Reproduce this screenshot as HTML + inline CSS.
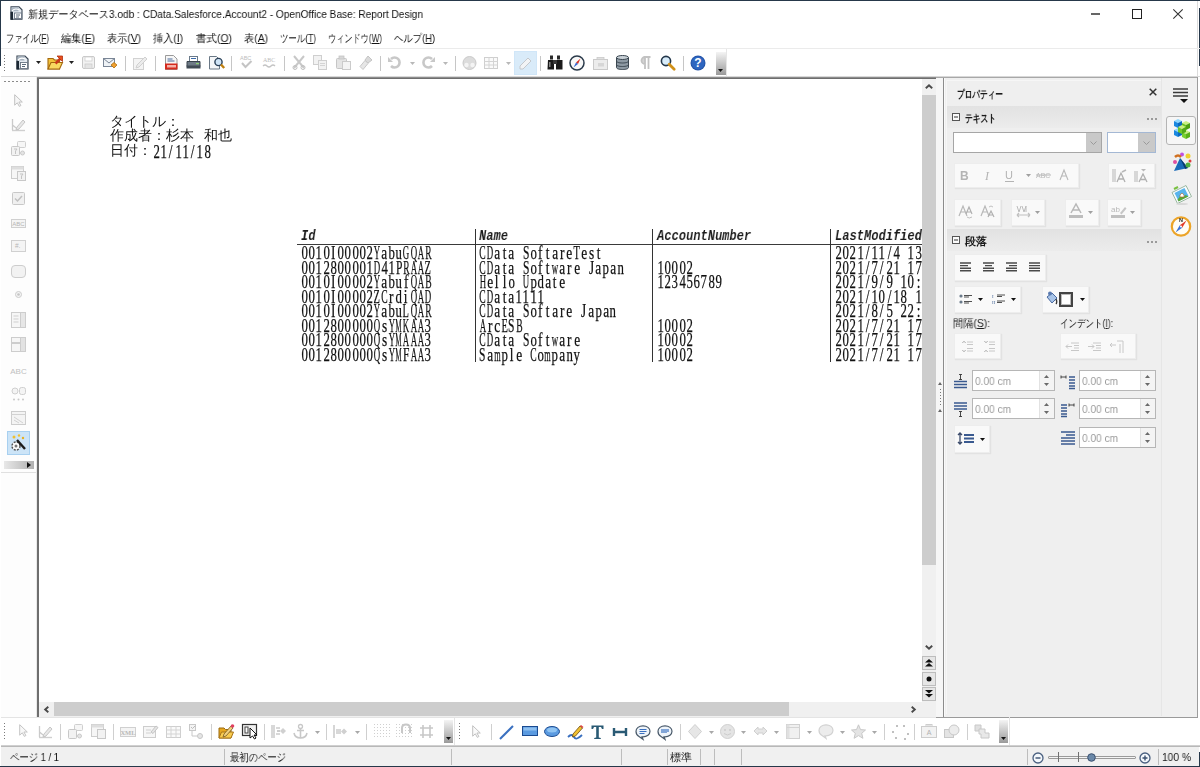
<!DOCTYPE html>
<html><head><meta charset="utf-8"><style>*{box-sizing:border-box;margin:0;padding:0}
html,body{width:1200px;height:767px;overflow:hidden;background:#fff;font-family:"Liberation Sans",sans-serif;font-size:12px;color:#000;position:relative}
.a{position:absolute}
.t{position:absolute;-webkit-font-smoothing:antialiased;will-change:transform;white-space:nowrap;line-height:1;transform-origin:0 0}
svg{position:absolute;overflow:visible}
.m{position:absolute;-webkit-font-smoothing:antialiased;will-change:transform;white-space:pre;line-height:1;font-family:"Liberation Mono",monospace;transform-origin:0 0}
</style></head><body><div class="a" style="left:0px;top:0px;width:1200px;height:1px;background:#26384a;"></div><div class="a" style="left:0px;top:0px;width:1px;height:66px;background:#26384a;"></div><div class="a" style="left:0px;top:766px;width:1200px;height:1px;background:#26384a;"></div><div class="a" style="left:1199px;top:752px;width:1px;height:15px;background:#26384a;"></div><svg style="left:10px;top:6px;" width="13" height="14" viewBox="0 0 13 14"><path d="M1 .8h8l3 3v9.5H1z" fill="#e6ecf2" stroke="#3a4654" stroke-width="1.1"/><path d="M1.5 1.3h7v4h-7z" fill="#a8b4c0"/><path d="M2 4.8q3-3 7-1" stroke="#fff" stroke-width="1.1" fill="none"/><rect x=".5" y="5.8" width="2.5" height="8" fill="#1c2834"/><rect x="4.5" y="7" width="7" height="5.5" fill="#fff" stroke="#6a7684" stroke-width=".9"/><path d="M6 9h4M6 11h3" stroke="#5a6a7a" stroke-width="1"/></svg><div class="t" id="t0" style="left:28px;top:9px;font-size:11px;color:#111;transform:scaleX(0.9195);">新規データベース3.odb : CData.Salesforce.Account2 - OpenOffice Base: Report Design</div><div class="a" style="left:1091px;top:13px;width:9px;height:2px;background:#666;"></div><div class="a" style="left:1132px;top:9px;width:10px;height:10px;background:transparent;border:1.2px solid #222"></div><svg style="left:1173px;top:9px;" width="10" height="10" viewBox="0 0 10 10"><path d="M0.3 0.3L9.7 9.7M9.7 0.3L0.3 9.7" stroke="#333" stroke-width="1.1"/></svg><div class="a" style="left:1197px;top:1px;width:1px;height:76px;background:#dcdcdc;"></div><div class="a" style="left:1199px;top:8px;width:1px;height:58px;background:#26384a;"></div><div class="t" id="t1" style="left:6px;top:33px;font-size:11px;color:#141414;transform:scaleX(0.7404);">ファイル(<u>F</u>)</div><div class="t" id="t2" style="left:61px;top:33px;font-size:11px;color:#141414;transform:scaleX(0.9267);">編集(<u>E</u>)</div><div class="t" id="t3" style="left:107px;top:33px;font-size:11px;color:#141414;transform:scaleX(0.9267);">表示(<u>V</u>)</div><div class="t" id="t4" style="left:153px;top:33px;font-size:11px;color:#141414;transform:scaleX(0.9257);">挿入(<u>I</u>)</div><div class="t" id="t5" style="left:196px;top:33px;font-size:11px;color:#141414;transform:scaleX(0.9497);">書式(<u>O</u>)</div><div class="t" id="t6" style="left:244px;top:33px;font-size:11px;color:#141414;transform:scaleX(0.9343);">表(<u>A</u>)</div><div class="t" id="t7" style="left:280px;top:33px;font-size:11px;color:#141414;transform:scaleX(0.7647);">ツール(<u>T</u>)</div><div class="t" id="t8" style="left:328px;top:33px;font-size:11px;color:#141414;transform:scaleX(0.7424);">ウィンドウ(<u>W</u>)</div><div class="t" id="t9" style="left:394px;top:33px;font-size:11px;color:#141414;transform:scaleX(0.8489);">ヘルプ(<u>H</u>)</div><div class="a" style="left:1px;top:48px;width:1199px;height:1px;background:#ebebeb;"></div><div class="a" style="left:4px;top:55px;width:1px;height:1px;background:#7a7a7a;"></div><div class="a" style="left:4px;top:58px;width:1px;height:1px;background:#7a7a7a;"></div><div class="a" style="left:4px;top:61px;width:1px;height:1px;background:#7a7a7a;"></div><div class="a" style="left:4px;top:64px;width:1px;height:1px;background:#7a7a7a;"></div><div class="a" style="left:4px;top:67px;width:1px;height:1px;background:#7a7a7a;"></div><div class="a" style="left:4px;top:70px;width:1px;height:1px;background:#7a7a7a;"></div><svg style="left:16px;top:55px;" width="13" height="15" viewBox="0 0 13 15"><path d="M1 1h8l3 3v10H1z" fill="#e6ecf2" stroke="#3a4654" stroke-width="1.2"/><path d="M1.5 1.5h7v4h-7z" fill="#a8b4c0"/><path d="M2 5q3-3 7-1" stroke="#fff" stroke-width="1.2" fill="none"/><rect x=".5" y="6" width="2.6" height="8.5" fill="#1c2834"/><rect x="4.5" y="7.5" width="7" height="6" fill="#fff" stroke="#6a7684" stroke-width=".9"/><path d="M6 9.5h4M6 11.5h3" stroke="#5a6a7a" stroke-width="1"/></svg><svg style="left:36px;top:61px;" width="5" height="3" viewBox="0 0 5 3"><path d="M0 0h5l-2.5 3z" fill="#222"/></svg><svg style="left:47px;top:55px;" width="16" height="15" viewBox="0 0 16 15"><path d="M1 3.5h5l1.5 1.5h5v9H1z" fill="#f2c23a" stroke="#a4680e" stroke-width="1.1"/><path d="M1 14l3-6.5h11.5L12.5 14z" fill="#f8d860" stroke="#a4680e" stroke-width="1.1"/><path d="M8.5 8.5L13.5 3.5" stroke="#c8381a" stroke-width="2.6"/><path d="M10 1h5.5v5.5z" fill="#e8501e" stroke="#b03010" stroke-width=".8"/></svg><svg style="left:69px;top:61px;" width="5" height="3" viewBox="0 0 5 3"><path d="M0 0h5l-2.5 3z" fill="#222"/></svg><svg style="left:82px;top:56px;" width="13" height="13" viewBox="0 0 13 13"><rect x=".5" y=".5" width="12" height="12" rx="1.5" fill="#f2f2f2" stroke="#c8c8c8"/><rect x="3" y="1" width="7" height="4" fill="#fff" stroke="#d0d0d0" stroke-width=".8"/><rect x="3" y="8" width="7" height="4.5" fill="#e4e4e4" stroke="#ccc" stroke-width=".8"/></svg><svg style="left:103px;top:58px;" width="15" height="11" viewBox="0 0 15 11"><rect x=".5" y=".5" width="11" height="8" fill="#eef2f6" stroke="#7a8696"/><path d="M.5 .5l5.5 4.5 5.5-4.5" stroke="#7a8696" fill="none"/><path d="M11 4.5l3 2.5-3 3-3-3z" fill="#f0a030" stroke="#b07010" stroke-width=".8"/></svg><div class="a" style="left:125px;top:56px;width:1px;height:15px;background:#c6c6c6;"></div><svg style="left:133px;top:56px;" width="14" height="14" viewBox="0 0 14 14"><rect x=".5" y="2.5" width="10" height="11" fill="#f4f4f4" stroke="#d2d2d2"/><path d="M4 9l8-8 2 2-8 8-3 1z" fill="#ececec" stroke="#d0d0d0"/></svg><div class="a" style="left:155px;top:56px;width:1px;height:15px;background:#c6c6c6;"></div><svg style="left:165px;top:55px;" width="13" height="15" viewBox="0 0 13 15"><path d="M.5 .5h8l3.5 3.5v10.5h-11.5z" fill="#f6f6f6" stroke="#9a9a9a"/><rect x="2.5" y="3.5" width="5" height="1" fill="#4a6a9a"/><rect x="2.5" y="5.5" width="7" height="1" fill="#4a6a9a"/><rect x="0" y="8.5" width="12.5" height="6" fill="#d42a1e"/><rect x="2" y="10" width="9" height="2.5" fill="#f6b0a8"/></svg><svg style="left:186px;top:56px;" width="15" height="13" viewBox="0 0 15 13"><rect x="3.5" y=".5" width="8" height="5" fill="#fff" stroke="#6a7a8a"/><rect x="5" y="2" width="5" height="1" fill="#3a6aaa"/><path d="M1 5.5h13v5h-13z" fill="#6e7a86" stroke="#38424c"/><rect x="0.5" y="9.5" width="14" height="3" fill="#404a54"/><rect x="10" y="7" width="3" height="1.2" fill="#8ad070"/></svg><svg style="left:209px;top:55px;" width="16" height="15" viewBox="0 0 16 15"><path d="M.5 1.5h7l3 3v9.5h-10z" fill="#f4f6f8" stroke="#6a7886"/><circle cx="9.5" cy="7" r="3.6" fill="#cfe4f6" stroke="#2a4058" stroke-width="1.4"/><path d="M12 9.5l3.2 3.5" stroke="#c08010" stroke-width="2.4"/></svg><div class="a" style="left:231px;top:56px;width:1px;height:15px;background:#c6c6c6;"></div><svg style="left:240px;top:55px;" width="13" height="14" viewBox="0 0 13 14"><text x="0" y="5" font-size="5.5" fill="#bcbcbc" font-family="Liberation Sans">ABC</text><path d="M2 8l3.5 4 6-6" stroke="#c4c4c4" stroke-width="2" fill="none"/></svg><svg style="left:262px;top:56px;" width="15" height="13" viewBox="0 0 15 13"><text x="1" y="6" font-size="6" fill="#bcbcbc" font-family="Liberation Serif">ABC</text><path d="M1 10q2-2 4 0t4 0 4 0" stroke="#c4c4c4" stroke-width="1.3" fill="none"/></svg><div class="a" style="left:284px;top:56px;width:1px;height:15px;background:#c6c6c6;"></div><svg style="left:292px;top:55px;" width="14" height="15" viewBox="0 0 14 15"><path d="M2 1l10 12M12 1L2 13" stroke="#c8c8c8" stroke-width="2"/><circle cx="3" cy="12.5" r="2" fill="none" stroke="#c0c0c0"/><circle cx="11" cy="12.5" r="2" fill="none" stroke="#c0c0c0"/></svg><svg style="left:313px;top:55px;" width="14" height="15" viewBox="0 0 14 15"><rect x=".5" y=".5" width="8" height="9" fill="#f2f2f2" stroke="#cfcfcf"/><rect x="5.5" y="5.5" width="8" height="9" fill="#f2f2f2" stroke="#cfcfcf"/><rect x="7" y="8" width="5" height="1" fill="#d4d4d4"/><rect x="7" y="10" width="5" height="1" fill="#d4d4d4"/></svg><svg style="left:336px;top:55px;" width="16" height="15" viewBox="0 0 16 15"><rect x=".5" y="3.5" width="10" height="10" rx="1" fill="#e4e4e4" stroke="#c6c6c6"/><rect x="3" y="1" width="5" height="3" fill="#d8d8d8" stroke="#c4c4c4" stroke-width=".8"/><rect x="6.5" y="6.5" width="8" height="8" fill="#f4f4f4" stroke="#cbcbcb"/></svg><svg style="left:360px;top:55px;" width="13" height="15" viewBox="0 0 13 15"><path d="M8 1l4 4-4 3-3-3z" fill="#dadada" stroke="#c4c4c4"/><path d="M5 5.5l3 3-5 6-3-3z" fill="#e6e6e6" stroke="#c8c8c8"/></svg><div class="a" style="left:380px;top:56px;width:1px;height:15px;background:#c6c6c6;"></div><svg style="left:388px;top:56px;" width="13" height="13" viewBox="0 0 13 13"><path d="M3 3a5 5 0 1 1 0 7" stroke="#c8c8c8" stroke-width="2.6" fill="none"/><path d="M0 1v5h5z" fill="#c8c8c8"/></svg><svg style="left:410px;top:62px;" width="5" height="3" viewBox="0 0 5 3"><path d="M0 0h5l-2.5 3z" fill="#b8b8b8"/></svg><svg style="left:421px;top:56px;" width="14" height="13" viewBox="0 0 14 13"><path d="M11 3a5 5 0 1 0 0 7" stroke="#c8c8c8" stroke-width="2.6" fill="none"/><path d="M14 1v5h-5z" fill="#c8c8c8"/></svg><svg style="left:443px;top:62px;" width="5" height="3" viewBox="0 0 5 3"><path d="M0 0h5l-2.5 3z" fill="#b8b8b8"/></svg><div class="a" style="left:455px;top:56px;width:1px;height:15px;background:#c6c6c6;"></div><svg style="left:462px;top:56px;" width="15" height="14" viewBox="0 0 15 14"><circle cx="7.5" cy="7" r="6.5" fill="#dcdcdc" stroke="#cacaca"/><circle cx="4.5" cy="9" r="2.2" fill="#f4f4f4"/><circle cx="10.5" cy="9" r="2.2" fill="#f4f4f4"/></svg><svg style="left:484px;top:57px;" width="14" height="12" viewBox="0 0 14 12"><rect x=".5" y=".5" width="13" height="11" fill="#fafafa" stroke="#cfcfcf"/><path d="M.5 4.5h13M.5 8h13M5 .5v11M9.5 .5v11" stroke="#d4d4d4"/></svg><svg style="left:506px;top:62px;" width="5" height="3" viewBox="0 0 5 3"><path d="M0 0h5l-2.5 3z" fill="#b8b8b8"/></svg><div class="a" style="left:514px;top:51px;width:23px;height:24px;background:#d9ebf9;border:1px solid #d0e6f8"></div><svg style="left:519px;top:57px;" width="13" height="12" viewBox="0 0 13 12"><path d="M1 9l8-8 3 3-8 8H1z" fill="#f2f4f6" stroke="#c4c8cc"/></svg><div class="a" style="left:540px;top:56px;width:1px;height:15px;background:#c6c6c6;"></div><svg style="left:547px;top:55px;" width="16" height="15" viewBox="0 0 16 15"><rect x="3" y="0.5" width="3" height="4" fill="#2a2a2a"/><rect x="10" y="0.5" width="3" height="4" fill="#2a2a2a"/><path d="M1 5h6v9.5H.5z" fill="#1a1a1a"/><path d="M9 5h6.5v9.5H9z" fill="#1a1a1a"/><rect x="6" y="5" width="4" height="4" fill="#3a3a3a"/><rect x="2" y="7" width="1.5" height="5" fill="#888"/></svg><svg style="left:569px;top:55px;" width="16" height="16" viewBox="0 0 16 16"><circle cx="8" cy="8" r="7" fill="#f8f8f8" stroke="#2a3a4a" stroke-width="1.5"/><path d="M11.5 3.5L7 7.5 9 9z" fill="#d83020"/><path d="M4.5 12.5L7 7.5 9 9z" fill="#3a6ad0"/></svg><svg style="left:593px;top:57px;" width="15" height="13" viewBox="0 0 15 13"><rect x=".5" y="2.5" width="14" height="10" fill="#ececec" stroke="#cacaca"/><rect x="4" y=".5" width="7" height="2" fill="#e0e0e0" stroke="#cacaca" stroke-width=".8"/><rect x="5" y="6" width="6" height="3.5" fill="#d6d6d6"/></svg><svg style="left:616px;top:55px;" width="13" height="15" viewBox="0 0 13 15"><path d="M.5 2.5v10c0 1.3 2.7 2 6 2s6-.7 6-2v-10" fill="#8e9aa4" stroke="#3a4650"/><ellipse cx="6.5" cy="2.5" rx="6" ry="2" fill="#c8d0d6" stroke="#3a4650"/><path d="M.5 6c0 1.3 2.7 2 6 2s6-.7 6-2M.5 9.5c0 1.3 2.7 2 6 2s6-.7 6-2" stroke="#3a4650" fill="none"/></svg><svg style="left:639px;top:56px;" width="12" height="13" viewBox="0 0 12 13"><path d="M5 1h6.5M6 1v12M9.5 1v12M6 1a3.5 3.5 0 0 0 0 7" stroke="#c2c2c2" stroke-width="1.8" fill="#d4d4d4"/></svg><svg style="left:660px;top:55px;" width="16" height="16" viewBox="0 0 16 16"><circle cx="6" cy="6" r="4.6" fill="#d8ecfa" stroke="#24384c" stroke-width="1.6"/><path d="M9.2 9.2l5 5" stroke="#d09018" stroke-width="2.8" stroke-linecap="round"/></svg><div class="a" style="left:683px;top:56px;width:1px;height:15px;background:#c6c6c6;"></div><svg style="left:690px;top:55px;" width="16" height="16" viewBox="0 0 16 16"><circle cx="8" cy="8" r="7.5" fill="#2454a8"/><circle cx="8" cy="8" r="6.5" fill="#2e66c0"/><text x="8" y="12.3" text-anchor="middle" font-size="12" font-weight="bold" fill="#fff" font-family="Liberation Sans">?</text></svg><div class="a" style="left:716px;top:52px;width:10px;height:23px;background:linear-gradient(#f4f4f4,#9a9a9a);"></div><svg style="left:718px;top:69px;" width="5" height="3" viewBox="0 0 5 3"><path d="M0 0h5l-2.5 3z" fill="#111"/></svg><div class="a" style="left:726px;top:49px;width:1px;height:27px;background:#e6e6e6;"></div><div class="a" style="left:1px;top:76px;width:1199px;height:1px;background:#d8d8d8;"></div><div class="a" style="left:1px;top:77px;width:36px;height:640px;background:#fdfdfd;"></div><div class="a" style="left:36px;top:77px;width:1px;height:640px;background:#e8e8e8;"></div><div class="a" style="left:4px;top:81px;width:2px;height:1px;background:#8a8a8a;"></div><div class="a" style="left:8px;top:81px;width:2px;height:1px;background:#8a8a8a;"></div><div class="a" style="left:12px;top:81px;width:2px;height:1px;background:#8a8a8a;"></div><div class="a" style="left:16px;top:81px;width:2px;height:1px;background:#8a8a8a;"></div><div class="a" style="left:20px;top:81px;width:2px;height:1px;background:#8a8a8a;"></div><div class="a" style="left:24px;top:81px;width:2px;height:1px;background:#8a8a8a;"></div><div class="a" style="left:28px;top:81px;width:2px;height:1px;background:#8a8a8a;"></div><svg style="left:14px;top:94px;" width="9" height="13" viewBox="0 0 9 13"><path d="M.7 .7v10.5l2.6-2.4 2 3.6 1.6-.9-2-3.5h3.4z" fill="#f6f6f6" stroke="#c2c2c2" stroke-width="1"/></svg><svg style="left:11px;top:117px;" width="15" height="14" viewBox="0 0 15 14"><path d="M1 13.5h13" stroke="#cfcfcf" stroke-width="1.4"/><path d="M1.5 2v11M1.5 8l6 5" stroke="#cacaca" stroke-width="1.3"/><path d="M6 10l6-7 2 2-6 7-3 1z" fill="#e8e8e8" stroke="#c6c6c6"/></svg><svg style="left:11px;top:141px;" width="15" height="15" viewBox="0 0 15 15"><rect x="6.5" y=".5" width="8" height="6" rx="1" fill="#f6f6f6" stroke="#cfcfcf"/><rect x=".5" y="5.5" width="8" height="9" rx="1" fill="#f2f2f2" stroke="#c8c8c8"/><path d="M3 8h3l-1.5 2v3" stroke="#c4c4c4" fill="none"/><circle cx="11.5" cy="12" r="2" fill="#e4e4e4" stroke="#cacaca"/></svg><svg style="left:11px;top:166px;" width="15" height="15" viewBox="0 0 15 15"><rect x=".5" y=".5" width="12" height="12" fill="#f6f6f6" stroke="#cdcdcd"/><rect x=".5" y=".5" width="12" height="3" fill="#dedede"/><rect x="6.5" y="5.5" width="8" height="9" fill="#f2f2f2" stroke="#c8c8c8"/><path d="M9 8h3l-1.5 2v3" stroke="#c4c4c4" fill="none"/></svg><svg style="left:12px;top:192px;" width="13" height="13" viewBox="0 0 13 13"><rect x=".5" y=".5" width="12" height="12" rx="1" fill="#f0f0f0" stroke="#c8c8c8"/><path d="M3 6.5l2.5 2.5 4.5-5" stroke="#c0c0c0" stroke-width="1.5" fill="none"/></svg><svg style="left:11px;top:219px;" width="15" height="9" viewBox="0 0 15 9"><rect x=".5" y=".5" width="14" height="8" fill="#f4f4f4" stroke="#d0d0d0"/><text x="7.5" y="6.8" text-anchor="middle" font-size="6" fill="#b4b4b4" font-family="Liberation Sans">ABC</text></svg><svg style="left:11px;top:240px;" width="15" height="12" viewBox="0 0 15 12"><rect x=".5" y=".5" width="14" height="11" fill="#f4f4f4" stroke="#d0d0d0"/><text x="4" y="8" font-size="6.5" fill="#b4b4b4" font-family="Liberation Sans">#.</text></svg><svg style="left:11px;top:265px;" width="15" height="13" viewBox="0 0 15 13"><rect x=".5" y=".5" width="14" height="12" rx="3.5" fill="#f2f2f2" stroke="#cdcdcd"/></svg><svg style="left:15px;top:291px;" width="7" height="7" viewBox="0 0 7 7"><circle cx="3.5" cy="3.5" r="3" fill="#f4f4f4" stroke="#cdcdcd"/><circle cx="3.5" cy="3.5" r="1.3" fill="#c4c4c4"/></svg><svg style="left:11px;top:312px;" width="15" height="16" viewBox="0 0 15 16"><rect x=".5" y=".5" width="14" height="15" fill="#f6f6f6" stroke="#cdcdcd"/><rect x="9.5" y=".5" width="5" height="15" fill="#e6e6e6" stroke="#cdcdcd"/><path d="M2.5 4h5M2.5 7h5M2.5 10h5" stroke="#cfcfcf"/></svg><svg style="left:11px;top:337px;" width="15" height="15" viewBox="0 0 15 15"><rect x=".5" y=".5" width="14" height="5" fill="#f6f6f6" stroke="#cdcdcd"/><rect x=".5" y="6.5" width="14" height="8" fill="#f6f6f6" stroke="#cdcdcd"/><rect x="9.5" y=".5" width="5" height="14" fill="#e2e2e2" stroke="#cdcdcd"/></svg><svg style="left:11px;top:366px;" width="15" height="8" viewBox="0 0 15 8"><text x="7.5" y="7.5" text-anchor="middle" font-size="8" fill="#c0c0c0" font-family="Liberation Sans">ABC</text></svg><svg style="left:11px;top:387px;" width="15" height="14" viewBox="0 0 15 14"><circle cx="4" cy="4" r="3" fill="#f4f4f4" stroke="#cfcfcf"/><rect x="8.5" y=".5" width="6" height="7" rx="2" fill="#f4f4f4" stroke="#cfcfcf"/><circle cx="3" cy="12.5" r="1" fill="#c8c8c8"/><circle cx="7.5" cy="12.5" r="1" fill="#c8c8c8"/><circle cx="12" cy="12.5" r="1" fill="#c8c8c8"/></svg><svg style="left:11px;top:411px;" width="15" height="14" viewBox="0 0 15 14"><rect x=".5" y=".5" width="14" height="13" fill="#f4f4f4" stroke="#cdcdcd"/><path d="M.5 3.5h14M3 6l9 6M3 9l5 3" stroke="#d2d2d2"/></svg><div class="a" style="left:7px;top:431px;width:23px;height:24px;background:#cce4f7;border:1px solid #a8d0f0"></div><svg style="left:10px;top:434px;" width="17" height="18" viewBox="0 0 17 18"><circle cx="6" cy="12" r="4" fill="#ffffff" stroke="#555" stroke-width="1.5" stroke-dasharray="2 1.2"/><circle cx="6" cy="12" r="1.5" fill="#777"/><path d="M7 6l8 9" stroke="#1c1c1c" stroke-width="2.4"/><circle cx="4" cy="3" r="1.5" fill="#f0c030"/><circle cx="9" cy="1.5" r="1.2" fill="#f0c030"/><circle cx="13" cy="4" r="1.2" fill="#e8b020"/></svg><div class="a" style="left:4px;top:461px;width:30px;height:8px;background:linear-gradient(90deg,#e8e8e8,#b0b0b0);"></div><svg style="left:27px;top:462px;" width="4" height="6" viewBox="0 0 4 6"><path d="M0 0l4 3-4 3z" fill="#111"/></svg><div class="a" style="left:1px;top:472px;width:35px;height:1px;background:#e0e0e0;"></div><div class="a" style="left:37px;top:77px;width:906px;height:641px;background:#f0f0f0;"></div><div class="a" style="left:37px;top:77px;width:2px;height:641px;background:#6e6e6e;"></div><div class="a" style="left:37px;top:77px;width:899px;height:1px;background:#8c8c8c;"></div><div class="a" style="left:37px;top:78px;width:899px;height:1px;background:#6e6e6e;"></div><div class="a" style="left:39px;top:79px;width:883px;height:623px;background:#fff;"></div><div class="a" style="left:922px;top:79px;width:14px;height:623px;background:#f0f0f0;"></div><div class="a" style="left:922px;top:95px;width:14px;height:470px;background:#cdcdcd;"></div><svg style="left:925px;top:84px;" width="8" height="5" viewBox="0 0 8 5"><path d="M.8 4.2L4 1.2l3.2 3" stroke="#4a4a4a" stroke-width="1.9" fill="none"/></svg><svg style="left:925px;top:645px;" width="8" height="5" viewBox="0 0 8 5"><path d="M.8 .8L4 3.8l3.2-3" stroke="#4a4a4a" stroke-width="1.9" fill="none"/></svg><div class="a" style="left:922px;top:656px;width:14px;height:14px;background:#e6e6e6;border:1px solid #bdbdbd"></div><svg style="left:925px;top:659px;" width="8" height="8" viewBox="0 0 8 8"><path d="M4 0l4 3.5H0zM4 4l4 3.5H0z" fill="#111"/></svg><div class="a" style="left:922px;top:672px;width:14px;height:14px;background:#e6e6e6;border:1px solid #bdbdbd"></div><svg style="left:926px;top:676px;" width="6" height="6" viewBox="0 0 6 6"><circle cx="3" cy="3" r="2.5" fill="#111"/></svg><div class="a" style="left:922px;top:687px;width:14px;height:14px;background:#e6e6e6;border:1px solid #bdbdbd"></div><svg style="left:925px;top:690px;" width="8" height="8" viewBox="0 0 8 8"><path d="M0 0h8L4 3.5zM0 4h8L4 7.5z" fill="#111"/></svg><div class="a" style="left:39px;top:702px;width:897px;height:15px;background:#f0f0f0;"></div><div class="a" style="left:54px;top:702px;width:735px;height:14px;background:#cdcdcd;"></div><svg style="left:44px;top:706px;" width="5" height="7" viewBox="0 0 5 7"><path d="M4.3 .8L1.2 3.5l3.1 2.7" stroke="#4a4a4a" stroke-width="1.9" fill="none"/></svg><svg style="left:911px;top:706px;" width="5" height="7" viewBox="0 0 5 7"><path d="M.7 .8L3.8 3.5 .7 6.2" stroke="#4a4a4a" stroke-width="1.9" fill="none"/></svg><div class="a" style="left:39px;top:79px;width:883px;height:623px;overflow:hidden"><div class="a" style="left:-39px;top:-79px;width:1200px;height:767px"><div class="t" id="t10" style="left:110px;top:114px;font-size:14.4px;color:#111;font-family:'Liberation Serif',serif;">タイトル：</div><div class="t" id="t11" style="left:110px;top:128px;font-size:14.4px;color:#111;font-family:'Liberation Serif',serif;">作成者：杉本</div><div class="t" id="t12" style="left:203.6px;top:128px;font-size:14.4px;color:#111;font-family:'Liberation Serif',serif;">和也</div><div class="t" id="t13" style="left:110px;top:143px;font-size:14.4px;color:#111;font-family:'Liberation Serif',serif;">日付：</div><div class="a" style="left:153.2px;top:142px;height:20px;width:62.0px;font-size:19px;color:#111;font-family:'Liberation Serif',serif;line-height:1;will-change:transform;-webkit-text-stroke:0.25px #111"><span class="a" style="left:-1.12px;top:0;transform:scaleX(0.674)">2</span><span class="a" style="left:6.12px;top:0;transform:scaleX(0.674)">1</span><span class="a" style="left:15.49px;top:0;transform:scaleX(0.700)">/</span><span class="a" style="left:20.62px;top:0;transform:scaleX(0.674)">1</span><span class="a" style="left:27.88px;top:0;transform:scaleX(0.674)">1</span><span class="a" style="left:37.24px;top:0;transform:scaleX(0.700)">/</span><span class="a" style="left:42.38px;top:0;transform:scaleX(0.674)">1</span><span class="a" style="left:49.62px;top:0;transform:scaleX(0.674)">8</span></div><div class="m" style="left:301px;top:229px;font-size:15.4px;color:#1a1a1a;transform:scaleX(0.7846);font-weight:bold;font-style:italic">Id</div><div class="m" style="left:479px;top:229px;font-size:15.4px;color:#1a1a1a;transform:scaleX(0.7846);font-weight:bold;font-style:italic">Name</div><div class="m" style="left:657px;top:229px;font-size:15.4px;color:#1a1a1a;transform:scaleX(0.7846);font-weight:bold;font-style:italic">AccountNumber</div><div class="m" style="left:835px;top:229px;font-size:15.4px;color:#1a1a1a;transform:scaleX(0.7846);font-weight:bold;font-style:italic">LastModifiedDate</div><div class="a" style="left:297px;top:244px;width:640px;height:1px;background:#3a3a3a;"></div><div class="a" style="left:475px;top:229px;width:1px;height:133px;background:#333;"></div><div class="a" style="left:652px;top:229px;width:1px;height:133px;background:#333;"></div><div class="a" style="left:830px;top:229px;width:1px;height:133px;background:#333;"></div><div class="a" style="left:301px;top:243.0px;height:20px;width:134.5px;font-size:19px;color:#111;font-family:'Liberation Serif',serif;line-height:1;will-change:transform;-webkit-text-stroke:0.25px #111"><span class="a" style="left:-1.12px;top:0;transform:scaleX(0.674)">0</span><span class="a" style="left:6.12px;top:0;transform:scaleX(0.674)">0</span><span class="a" style="left:13.38px;top:0;transform:scaleX(0.674)">1</span><span class="a" style="left:20.62px;top:0;transform:scaleX(0.674)">0</span><span class="a" style="left:29.46px;top:0;transform:scaleX(0.700)">I</span><span class="a" style="left:35.12px;top:0;transform:scaleX(0.674)">0</span><span class="a" style="left:42.38px;top:0;transform:scaleX(0.674)">0</span><span class="a" style="left:49.62px;top:0;transform:scaleX(0.674)">0</span><span class="a" style="left:56.88px;top:0;transform:scaleX(0.674)">0</span><span class="a" style="left:64.12px;top:0;transform:scaleX(0.674)">2</span><span class="a" style="left:69.26px;top:0;transform:scaleX(0.466)">Y</span><span class="a" style="left:79.16px;top:0;transform:scaleX(0.700)">a</span><span class="a" style="left:85.88px;top:0;transform:scaleX(0.674)">b</span><span class="a" style="left:93.12px;top:0;transform:scaleX(0.674)">u</span><span class="a" style="left:98.26px;top:0;transform:scaleX(0.466)">G</span><span class="a" style="left:105.51px;top:0;transform:scaleX(0.466)">Q</span><span class="a" style="left:112.76px;top:0;transform:scaleX(0.466)">A</span><span class="a" style="left:120.54px;top:0;transform:scaleX(0.505)">R</span></div><div class="a" style="left:479px;top:243.0px;height:20px;width:127.25px;font-size:19px;color:#111;font-family:'Liberation Serif',serif;line-height:1;will-change:transform;-webkit-text-stroke:0.25px #111"><span class="a" style="left:-2.71px;top:0;transform:scaleX(0.505)">C</span><span class="a" style="left:4.01px;top:0;transform:scaleX(0.466)">D</span><span class="a" style="left:13.91px;top:0;transform:scaleX(0.700)">a</span><span class="a" style="left:22.74px;top:0;transform:scaleX(0.700)">t</span><span class="a" style="left:28.41px;top:0;transform:scaleX(0.700)">a</span><span class="a" style="left:41.84px;top:0;transform:scaleX(0.606)">S</span><span class="a" style="left:49.62px;top:0;transform:scaleX(0.674)">o</span><span class="a" style="left:58.46px;top:0;transform:scaleX(0.700)">f</span><span class="a" style="left:66.24px;top:0;transform:scaleX(0.700)">t</span><span class="a" style="left:71.91px;top:0;transform:scaleX(0.700)">a</span><span class="a" style="left:80.21px;top:0;transform:scaleX(0.700)">r</span><span class="a" style="left:86.41px;top:0;transform:scaleX(0.700)">e</span><span class="a" style="left:92.07px;top:0;transform:scaleX(0.551)">T</span><span class="a" style="left:100.91px;top:0;transform:scaleX(0.700)">e</span><span class="a" style="left:108.68px;top:0;transform:scaleX(0.700)">s</span><span class="a" style="left:116.99px;top:0;transform:scaleX(0.700)">t</span></div><div class="a" style="left:835px;top:243.0px;height:20px;width:98.25px;font-size:19px;color:#111;font-family:'Liberation Serif',serif;line-height:1;will-change:transform;-webkit-text-stroke:0.25px #111"><span class="a" style="left:-1.12px;top:0;transform:scaleX(0.674)">2</span><span class="a" style="left:6.12px;top:0;transform:scaleX(0.674)">0</span><span class="a" style="left:13.38px;top:0;transform:scaleX(0.674)">2</span><span class="a" style="left:20.62px;top:0;transform:scaleX(0.674)">1</span><span class="a" style="left:29.99px;top:0;transform:scaleX(0.700)">/</span><span class="a" style="left:35.12px;top:0;transform:scaleX(0.674)">1</span><span class="a" style="left:42.38px;top:0;transform:scaleX(0.674)">1</span><span class="a" style="left:51.74px;top:0;transform:scaleX(0.700)">/</span><span class="a" style="left:56.88px;top:0;transform:scaleX(0.674)">4</span><span class="a" style="left:71.38px;top:0;transform:scaleX(0.674)">1</span><span class="a" style="left:78.62px;top:0;transform:scaleX(0.674)">3</span><span class="a" style="left:87.99px;top:0;transform:scaleX(0.700)">:</span></div><div class="a" style="left:301px;top:257.57px;height:20px;width:134.5px;font-size:19px;color:#111;font-family:'Liberation Serif',serif;line-height:1;will-change:transform;-webkit-text-stroke:0.25px #111"><span class="a" style="left:-1.12px;top:0;transform:scaleX(0.674)">0</span><span class="a" style="left:6.12px;top:0;transform:scaleX(0.674)">0</span><span class="a" style="left:13.38px;top:0;transform:scaleX(0.674)">1</span><span class="a" style="left:20.62px;top:0;transform:scaleX(0.674)">2</span><span class="a" style="left:27.88px;top:0;transform:scaleX(0.674)">8</span><span class="a" style="left:35.12px;top:0;transform:scaleX(0.674)">0</span><span class="a" style="left:42.38px;top:0;transform:scaleX(0.674)">0</span><span class="a" style="left:49.62px;top:0;transform:scaleX(0.674)">0</span><span class="a" style="left:56.88px;top:0;transform:scaleX(0.674)">0</span><span class="a" style="left:64.12px;top:0;transform:scaleX(0.674)">1</span><span class="a" style="left:69.26px;top:0;transform:scaleX(0.466)">D</span><span class="a" style="left:78.62px;top:0;transform:scaleX(0.674)">4</span><span class="a" style="left:85.88px;top:0;transform:scaleX(0.674)">1</span><span class="a" style="left:92.59px;top:0;transform:scaleX(0.606)">P</span><span class="a" style="left:98.79px;top:0;transform:scaleX(0.505)">R</span><span class="a" style="left:105.51px;top:0;transform:scaleX(0.466)">A</span><span class="a" style="left:112.76px;top:0;transform:scaleX(0.466)">A</span><span class="a" style="left:121.07px;top:0;transform:scaleX(0.551)">Z</span></div><div class="a" style="left:479px;top:257.57px;height:20px;width:149.0px;font-size:19px;color:#111;font-family:'Liberation Serif',serif;line-height:1;will-change:transform;-webkit-text-stroke:0.25px #111"><span class="a" style="left:-2.71px;top:0;transform:scaleX(0.505)">C</span><span class="a" style="left:4.01px;top:0;transform:scaleX(0.466)">D</span><span class="a" style="left:13.91px;top:0;transform:scaleX(0.700)">a</span><span class="a" style="left:22.74px;top:0;transform:scaleX(0.700)">t</span><span class="a" style="left:28.41px;top:0;transform:scaleX(0.700)">a</span><span class="a" style="left:41.84px;top:0;transform:scaleX(0.606)">S</span><span class="a" style="left:49.62px;top:0;transform:scaleX(0.674)">o</span><span class="a" style="left:58.46px;top:0;transform:scaleX(0.700)">f</span><span class="a" style="left:66.24px;top:0;transform:scaleX(0.700)">t</span><span class="a" style="left:69.26px;top:0;transform:scaleX(0.466)">w</span><span class="a" style="left:79.16px;top:0;transform:scaleX(0.700)">a</span><span class="a" style="left:87.46px;top:0;transform:scaleX(0.700)">r</span><span class="a" style="left:93.66px;top:0;transform:scaleX(0.700)">e</span><span class="a" style="left:108.68px;top:0;transform:scaleX(0.700)">J</span><span class="a" style="left:115.41px;top:0;transform:scaleX(0.700)">a</span><span class="a" style="left:122.12px;top:0;transform:scaleX(0.674)">p</span><span class="a" style="left:129.91px;top:0;transform:scaleX(0.700)">a</span><span class="a" style="left:136.62px;top:0;transform:scaleX(0.674)">n</span></div><div class="a" style="left:657px;top:257.57px;height:20px;width:40.25px;font-size:19px;color:#111;font-family:'Liberation Serif',serif;line-height:1;will-change:transform;-webkit-text-stroke:0.25px #111"><span class="a" style="left:-1.12px;top:0;transform:scaleX(0.674)">1</span><span class="a" style="left:6.12px;top:0;transform:scaleX(0.674)">0</span><span class="a" style="left:13.38px;top:0;transform:scaleX(0.674)">0</span><span class="a" style="left:20.62px;top:0;transform:scaleX(0.674)">0</span><span class="a" style="left:27.88px;top:0;transform:scaleX(0.674)">2</span></div><div class="a" style="left:835px;top:257.57px;height:20px;width:91.0px;font-size:19px;color:#111;font-family:'Liberation Serif',serif;line-height:1;will-change:transform;-webkit-text-stroke:0.25px #111"><span class="a" style="left:-1.12px;top:0;transform:scaleX(0.674)">2</span><span class="a" style="left:6.12px;top:0;transform:scaleX(0.674)">0</span><span class="a" style="left:13.38px;top:0;transform:scaleX(0.674)">2</span><span class="a" style="left:20.62px;top:0;transform:scaleX(0.674)">1</span><span class="a" style="left:29.99px;top:0;transform:scaleX(0.700)">/</span><span class="a" style="left:35.12px;top:0;transform:scaleX(0.674)">7</span><span class="a" style="left:44.49px;top:0;transform:scaleX(0.700)">/</span><span class="a" style="left:49.62px;top:0;transform:scaleX(0.674)">2</span><span class="a" style="left:56.88px;top:0;transform:scaleX(0.674)">1</span><span class="a" style="left:71.38px;top:0;transform:scaleX(0.674)">1</span><span class="a" style="left:78.62px;top:0;transform:scaleX(0.674)">7</span></div><div class="a" style="left:301px;top:272.14px;height:20px;width:134.5px;font-size:19px;color:#111;font-family:'Liberation Serif',serif;line-height:1;will-change:transform;-webkit-text-stroke:0.25px #111"><span class="a" style="left:-1.12px;top:0;transform:scaleX(0.674)">0</span><span class="a" style="left:6.12px;top:0;transform:scaleX(0.674)">0</span><span class="a" style="left:13.38px;top:0;transform:scaleX(0.674)">1</span><span class="a" style="left:20.62px;top:0;transform:scaleX(0.674)">0</span><span class="a" style="left:29.46px;top:0;transform:scaleX(0.700)">I</span><span class="a" style="left:35.12px;top:0;transform:scaleX(0.674)">0</span><span class="a" style="left:42.38px;top:0;transform:scaleX(0.674)">0</span><span class="a" style="left:49.62px;top:0;transform:scaleX(0.674)">0</span><span class="a" style="left:56.88px;top:0;transform:scaleX(0.674)">0</span><span class="a" style="left:64.12px;top:0;transform:scaleX(0.674)">2</span><span class="a" style="left:69.26px;top:0;transform:scaleX(0.466)">Y</span><span class="a" style="left:79.16px;top:0;transform:scaleX(0.700)">a</span><span class="a" style="left:85.88px;top:0;transform:scaleX(0.674)">b</span><span class="a" style="left:93.12px;top:0;transform:scaleX(0.674)">u</span><span class="a" style="left:101.96px;top:0;transform:scaleX(0.700)">f</span><span class="a" style="left:105.51px;top:0;transform:scaleX(0.466)">Q</span><span class="a" style="left:112.76px;top:0;transform:scaleX(0.466)">A</span><span class="a" style="left:120.54px;top:0;transform:scaleX(0.505)">B</span></div><div class="a" style="left:479px;top:272.14px;height:20px;width:91.0px;font-size:19px;color:#111;font-family:'Liberation Serif',serif;line-height:1;will-change:transform;-webkit-text-stroke:0.25px #111"><span class="a" style="left:-3.24px;top:0;transform:scaleX(0.466)">H</span><span class="a" style="left:6.66px;top:0;transform:scaleX(0.700)">e</span><span class="a" style="left:15.49px;top:0;transform:scaleX(0.700)">l</span><span class="a" style="left:22.74px;top:0;transform:scaleX(0.700)">l</span><span class="a" style="left:27.88px;top:0;transform:scaleX(0.674)">o</span><span class="a" style="left:40.26px;top:0;transform:scaleX(0.466)">U</span><span class="a" style="left:49.62px;top:0;transform:scaleX(0.674)">p</span><span class="a" style="left:56.88px;top:0;transform:scaleX(0.674)">d</span><span class="a" style="left:64.66px;top:0;transform:scaleX(0.700)">a</span><span class="a" style="left:73.49px;top:0;transform:scaleX(0.700)">t</span><span class="a" style="left:79.16px;top:0;transform:scaleX(0.700)">e</span></div><div class="a" style="left:657px;top:272.14px;height:20px;width:69.25px;font-size:19px;color:#111;font-family:'Liberation Serif',serif;line-height:1;will-change:transform;-webkit-text-stroke:0.25px #111"><span class="a" style="left:-1.12px;top:0;transform:scaleX(0.674)">1</span><span class="a" style="left:6.12px;top:0;transform:scaleX(0.674)">2</span><span class="a" style="left:13.38px;top:0;transform:scaleX(0.674)">3</span><span class="a" style="left:20.62px;top:0;transform:scaleX(0.674)">4</span><span class="a" style="left:27.88px;top:0;transform:scaleX(0.674)">5</span><span class="a" style="left:35.12px;top:0;transform:scaleX(0.674)">6</span><span class="a" style="left:42.38px;top:0;transform:scaleX(0.674)">7</span><span class="a" style="left:49.62px;top:0;transform:scaleX(0.674)">8</span><span class="a" style="left:56.88px;top:0;transform:scaleX(0.674)">9</span></div><div class="a" style="left:835px;top:272.14px;height:20px;width:91.0px;font-size:19px;color:#111;font-family:'Liberation Serif',serif;line-height:1;will-change:transform;-webkit-text-stroke:0.25px #111"><span class="a" style="left:-1.12px;top:0;transform:scaleX(0.674)">2</span><span class="a" style="left:6.12px;top:0;transform:scaleX(0.674)">0</span><span class="a" style="left:13.38px;top:0;transform:scaleX(0.674)">2</span><span class="a" style="left:20.62px;top:0;transform:scaleX(0.674)">1</span><span class="a" style="left:29.99px;top:0;transform:scaleX(0.700)">/</span><span class="a" style="left:35.12px;top:0;transform:scaleX(0.674)">9</span><span class="a" style="left:44.49px;top:0;transform:scaleX(0.700)">/</span><span class="a" style="left:49.62px;top:0;transform:scaleX(0.674)">9</span><span class="a" style="left:64.12px;top:0;transform:scaleX(0.674)">1</span><span class="a" style="left:71.38px;top:0;transform:scaleX(0.674)">0</span><span class="a" style="left:80.74px;top:0;transform:scaleX(0.700)">:</span></div><div class="a" style="left:301px;top:286.71px;height:20px;width:134.5px;font-size:19px;color:#111;font-family:'Liberation Serif',serif;line-height:1;will-change:transform;-webkit-text-stroke:0.25px #111"><span class="a" style="left:-1.12px;top:0;transform:scaleX(0.674)">0</span><span class="a" style="left:6.12px;top:0;transform:scaleX(0.674)">0</span><span class="a" style="left:13.38px;top:0;transform:scaleX(0.674)">1</span><span class="a" style="left:20.62px;top:0;transform:scaleX(0.674)">0</span><span class="a" style="left:29.46px;top:0;transform:scaleX(0.700)">I</span><span class="a" style="left:35.12px;top:0;transform:scaleX(0.674)">0</span><span class="a" style="left:42.38px;top:0;transform:scaleX(0.674)">0</span><span class="a" style="left:49.62px;top:0;transform:scaleX(0.674)">0</span><span class="a" style="left:56.88px;top:0;transform:scaleX(0.674)">0</span><span class="a" style="left:64.12px;top:0;transform:scaleX(0.674)">2</span><span class="a" style="left:70.32px;top:0;transform:scaleX(0.551)">Z</span><span class="a" style="left:77.04px;top:0;transform:scaleX(0.505)">C</span><span class="a" style="left:87.46px;top:0;transform:scaleX(0.700)">r</span><span class="a" style="left:93.12px;top:0;transform:scaleX(0.674)">d</span><span class="a" style="left:102.49px;top:0;transform:scaleX(0.700)">i</span><span class="a" style="left:105.51px;top:0;transform:scaleX(0.466)">Q</span><span class="a" style="left:112.76px;top:0;transform:scaleX(0.466)">A</span><span class="a" style="left:120.01px;top:0;transform:scaleX(0.466)">D</span></div><div class="a" style="left:479px;top:286.71px;height:20px;width:69.25px;font-size:19px;color:#111;font-family:'Liberation Serif',serif;line-height:1;will-change:transform;-webkit-text-stroke:0.25px #111"><span class="a" style="left:-2.71px;top:0;transform:scaleX(0.505)">C</span><span class="a" style="left:4.01px;top:0;transform:scaleX(0.466)">D</span><span class="a" style="left:13.91px;top:0;transform:scaleX(0.700)">a</span><span class="a" style="left:22.74px;top:0;transform:scaleX(0.700)">t</span><span class="a" style="left:28.41px;top:0;transform:scaleX(0.700)">a</span><span class="a" style="left:35.12px;top:0;transform:scaleX(0.674)">1</span><span class="a" style="left:42.38px;top:0;transform:scaleX(0.674)">1</span><span class="a" style="left:49.62px;top:0;transform:scaleX(0.674)">1</span><span class="a" style="left:56.88px;top:0;transform:scaleX(0.674)">1</span></div><div class="a" style="left:835px;top:286.71px;height:20px;width:91.0px;font-size:19px;color:#111;font-family:'Liberation Serif',serif;line-height:1;will-change:transform;-webkit-text-stroke:0.25px #111"><span class="a" style="left:-1.12px;top:0;transform:scaleX(0.674)">2</span><span class="a" style="left:6.12px;top:0;transform:scaleX(0.674)">0</span><span class="a" style="left:13.38px;top:0;transform:scaleX(0.674)">2</span><span class="a" style="left:20.62px;top:0;transform:scaleX(0.674)">1</span><span class="a" style="left:29.99px;top:0;transform:scaleX(0.700)">/</span><span class="a" style="left:35.12px;top:0;transform:scaleX(0.674)">1</span><span class="a" style="left:42.38px;top:0;transform:scaleX(0.674)">0</span><span class="a" style="left:51.74px;top:0;transform:scaleX(0.700)">/</span><span class="a" style="left:56.88px;top:0;transform:scaleX(0.674)">1</span><span class="a" style="left:64.12px;top:0;transform:scaleX(0.674)">8</span><span class="a" style="left:78.62px;top:0;transform:scaleX(0.674)">1</span></div><div class="a" style="left:301px;top:301.28px;height:20px;width:134.5px;font-size:19px;color:#111;font-family:'Liberation Serif',serif;line-height:1;will-change:transform;-webkit-text-stroke:0.25px #111"><span class="a" style="left:-1.12px;top:0;transform:scaleX(0.674)">0</span><span class="a" style="left:6.12px;top:0;transform:scaleX(0.674)">0</span><span class="a" style="left:13.38px;top:0;transform:scaleX(0.674)">1</span><span class="a" style="left:20.62px;top:0;transform:scaleX(0.674)">0</span><span class="a" style="left:29.46px;top:0;transform:scaleX(0.700)">I</span><span class="a" style="left:35.12px;top:0;transform:scaleX(0.674)">0</span><span class="a" style="left:42.38px;top:0;transform:scaleX(0.674)">0</span><span class="a" style="left:49.62px;top:0;transform:scaleX(0.674)">0</span><span class="a" style="left:56.88px;top:0;transform:scaleX(0.674)">0</span><span class="a" style="left:64.12px;top:0;transform:scaleX(0.674)">2</span><span class="a" style="left:69.26px;top:0;transform:scaleX(0.466)">Y</span><span class="a" style="left:79.16px;top:0;transform:scaleX(0.700)">a</span><span class="a" style="left:85.88px;top:0;transform:scaleX(0.674)">b</span><span class="a" style="left:93.12px;top:0;transform:scaleX(0.674)">u</span><span class="a" style="left:99.32px;top:0;transform:scaleX(0.551)">L</span><span class="a" style="left:105.51px;top:0;transform:scaleX(0.466)">Q</span><span class="a" style="left:112.76px;top:0;transform:scaleX(0.466)">A</span><span class="a" style="left:120.54px;top:0;transform:scaleX(0.505)">R</span></div><div class="a" style="left:479px;top:301.28px;height:20px;width:141.75px;font-size:19px;color:#111;font-family:'Liberation Serif',serif;line-height:1;will-change:transform;-webkit-text-stroke:0.25px #111"><span class="a" style="left:-2.71px;top:0;transform:scaleX(0.505)">C</span><span class="a" style="left:4.01px;top:0;transform:scaleX(0.466)">D</span><span class="a" style="left:13.91px;top:0;transform:scaleX(0.700)">a</span><span class="a" style="left:22.74px;top:0;transform:scaleX(0.700)">t</span><span class="a" style="left:28.41px;top:0;transform:scaleX(0.700)">a</span><span class="a" style="left:41.84px;top:0;transform:scaleX(0.606)">S</span><span class="a" style="left:49.62px;top:0;transform:scaleX(0.674)">o</span><span class="a" style="left:58.46px;top:0;transform:scaleX(0.700)">f</span><span class="a" style="left:66.24px;top:0;transform:scaleX(0.700)">t</span><span class="a" style="left:71.91px;top:0;transform:scaleX(0.700)">a</span><span class="a" style="left:80.21px;top:0;transform:scaleX(0.700)">r</span><span class="a" style="left:86.41px;top:0;transform:scaleX(0.700)">e</span><span class="a" style="left:101.43px;top:0;transform:scaleX(0.700)">J</span><span class="a" style="left:108.16px;top:0;transform:scaleX(0.700)">a</span><span class="a" style="left:114.88px;top:0;transform:scaleX(0.674)">p</span><span class="a" style="left:122.66px;top:0;transform:scaleX(0.700)">a</span><span class="a" style="left:129.38px;top:0;transform:scaleX(0.674)">n</span></div><div class="a" style="left:835px;top:301.28px;height:20px;width:91.0px;font-size:19px;color:#111;font-family:'Liberation Serif',serif;line-height:1;will-change:transform;-webkit-text-stroke:0.25px #111"><span class="a" style="left:-1.12px;top:0;transform:scaleX(0.674)">2</span><span class="a" style="left:6.12px;top:0;transform:scaleX(0.674)">0</span><span class="a" style="left:13.38px;top:0;transform:scaleX(0.674)">2</span><span class="a" style="left:20.62px;top:0;transform:scaleX(0.674)">1</span><span class="a" style="left:29.99px;top:0;transform:scaleX(0.700)">/</span><span class="a" style="left:35.12px;top:0;transform:scaleX(0.674)">8</span><span class="a" style="left:44.49px;top:0;transform:scaleX(0.700)">/</span><span class="a" style="left:49.62px;top:0;transform:scaleX(0.674)">5</span><span class="a" style="left:64.12px;top:0;transform:scaleX(0.674)">2</span><span class="a" style="left:71.38px;top:0;transform:scaleX(0.674)">2</span><span class="a" style="left:80.74px;top:0;transform:scaleX(0.700)">:</span></div><div class="a" style="left:301px;top:315.85px;height:20px;width:134.5px;font-size:19px;color:#111;font-family:'Liberation Serif',serif;line-height:1;will-change:transform;-webkit-text-stroke:0.25px #111"><span class="a" style="left:-1.12px;top:0;transform:scaleX(0.674)">0</span><span class="a" style="left:6.12px;top:0;transform:scaleX(0.674)">0</span><span class="a" style="left:13.38px;top:0;transform:scaleX(0.674)">1</span><span class="a" style="left:20.62px;top:0;transform:scaleX(0.674)">2</span><span class="a" style="left:27.88px;top:0;transform:scaleX(0.674)">8</span><span class="a" style="left:35.12px;top:0;transform:scaleX(0.674)">0</span><span class="a" style="left:42.38px;top:0;transform:scaleX(0.674)">0</span><span class="a" style="left:49.62px;top:0;transform:scaleX(0.674)">0</span><span class="a" style="left:56.88px;top:0;transform:scaleX(0.674)">0</span><span class="a" style="left:64.12px;top:0;transform:scaleX(0.674)">0</span><span class="a" style="left:69.26px;top:0;transform:scaleX(0.466)">Q</span><span class="a" style="left:79.68px;top:0;transform:scaleX(0.700)">s</span><span class="a" style="left:83.76px;top:0;transform:scaleX(0.466)">Y</span><span class="a" style="left:89.43px;top:0;transform:scaleX(0.379)">M</span><span class="a" style="left:98.26px;top:0;transform:scaleX(0.466)">K</span><span class="a" style="left:105.51px;top:0;transform:scaleX(0.466)">A</span><span class="a" style="left:112.76px;top:0;transform:scaleX(0.466)">A</span><span class="a" style="left:122.12px;top:0;transform:scaleX(0.674)">3</span></div><div class="a" style="left:479px;top:315.85px;height:20px;width:47.5px;font-size:19px;color:#111;font-family:'Liberation Serif',serif;line-height:1;will-change:transform;-webkit-text-stroke:0.25px #111"><span class="a" style="left:-3.24px;top:0;transform:scaleX(0.466)">A</span><span class="a" style="left:7.71px;top:0;transform:scaleX(0.700)">r</span><span class="a" style="left:13.91px;top:0;transform:scaleX(0.700)">c</span><span class="a" style="left:19.57px;top:0;transform:scaleX(0.551)">E</span><span class="a" style="left:27.34px;top:0;transform:scaleX(0.606)">S</span><span class="a" style="left:33.54px;top:0;transform:scaleX(0.505)">B</span></div><div class="a" style="left:657px;top:315.85px;height:20px;width:40.25px;font-size:19px;color:#111;font-family:'Liberation Serif',serif;line-height:1;will-change:transform;-webkit-text-stroke:0.25px #111"><span class="a" style="left:-1.12px;top:0;transform:scaleX(0.674)">1</span><span class="a" style="left:6.12px;top:0;transform:scaleX(0.674)">0</span><span class="a" style="left:13.38px;top:0;transform:scaleX(0.674)">0</span><span class="a" style="left:20.62px;top:0;transform:scaleX(0.674)">0</span><span class="a" style="left:27.88px;top:0;transform:scaleX(0.674)">2</span></div><div class="a" style="left:835px;top:315.85px;height:20px;width:91.0px;font-size:19px;color:#111;font-family:'Liberation Serif',serif;line-height:1;will-change:transform;-webkit-text-stroke:0.25px #111"><span class="a" style="left:-1.12px;top:0;transform:scaleX(0.674)">2</span><span class="a" style="left:6.12px;top:0;transform:scaleX(0.674)">0</span><span class="a" style="left:13.38px;top:0;transform:scaleX(0.674)">2</span><span class="a" style="left:20.62px;top:0;transform:scaleX(0.674)">1</span><span class="a" style="left:29.99px;top:0;transform:scaleX(0.700)">/</span><span class="a" style="left:35.12px;top:0;transform:scaleX(0.674)">7</span><span class="a" style="left:44.49px;top:0;transform:scaleX(0.700)">/</span><span class="a" style="left:49.62px;top:0;transform:scaleX(0.674)">2</span><span class="a" style="left:56.88px;top:0;transform:scaleX(0.674)">1</span><span class="a" style="left:71.38px;top:0;transform:scaleX(0.674)">1</span><span class="a" style="left:78.62px;top:0;transform:scaleX(0.674)">7</span></div><div class="a" style="left:301px;top:330.42px;height:20px;width:134.5px;font-size:19px;color:#111;font-family:'Liberation Serif',serif;line-height:1;will-change:transform;-webkit-text-stroke:0.25px #111"><span class="a" style="left:-1.12px;top:0;transform:scaleX(0.674)">0</span><span class="a" style="left:6.12px;top:0;transform:scaleX(0.674)">0</span><span class="a" style="left:13.38px;top:0;transform:scaleX(0.674)">1</span><span class="a" style="left:20.62px;top:0;transform:scaleX(0.674)">2</span><span class="a" style="left:27.88px;top:0;transform:scaleX(0.674)">8</span><span class="a" style="left:35.12px;top:0;transform:scaleX(0.674)">0</span><span class="a" style="left:42.38px;top:0;transform:scaleX(0.674)">0</span><span class="a" style="left:49.62px;top:0;transform:scaleX(0.674)">0</span><span class="a" style="left:56.88px;top:0;transform:scaleX(0.674)">0</span><span class="a" style="left:64.12px;top:0;transform:scaleX(0.674)">0</span><span class="a" style="left:69.26px;top:0;transform:scaleX(0.466)">Q</span><span class="a" style="left:79.68px;top:0;transform:scaleX(0.700)">s</span><span class="a" style="left:83.76px;top:0;transform:scaleX(0.466)">Y</span><span class="a" style="left:89.43px;top:0;transform:scaleX(0.379)">M</span><span class="a" style="left:98.26px;top:0;transform:scaleX(0.466)">A</span><span class="a" style="left:105.51px;top:0;transform:scaleX(0.466)">A</span><span class="a" style="left:112.76px;top:0;transform:scaleX(0.466)">A</span><span class="a" style="left:122.12px;top:0;transform:scaleX(0.674)">3</span></div><div class="a" style="left:479px;top:330.42px;height:20px;width:105.5px;font-size:19px;color:#111;font-family:'Liberation Serif',serif;line-height:1;will-change:transform;-webkit-text-stroke:0.25px #111"><span class="a" style="left:-2.71px;top:0;transform:scaleX(0.505)">C</span><span class="a" style="left:4.01px;top:0;transform:scaleX(0.466)">D</span><span class="a" style="left:13.91px;top:0;transform:scaleX(0.700)">a</span><span class="a" style="left:22.74px;top:0;transform:scaleX(0.700)">t</span><span class="a" style="left:28.41px;top:0;transform:scaleX(0.700)">a</span><span class="a" style="left:41.84px;top:0;transform:scaleX(0.606)">S</span><span class="a" style="left:49.62px;top:0;transform:scaleX(0.674)">o</span><span class="a" style="left:58.46px;top:0;transform:scaleX(0.700)">f</span><span class="a" style="left:66.24px;top:0;transform:scaleX(0.700)">t</span><span class="a" style="left:69.26px;top:0;transform:scaleX(0.466)">w</span><span class="a" style="left:79.16px;top:0;transform:scaleX(0.700)">a</span><span class="a" style="left:87.46px;top:0;transform:scaleX(0.700)">r</span><span class="a" style="left:93.66px;top:0;transform:scaleX(0.700)">e</span></div><div class="a" style="left:657px;top:330.42px;height:20px;width:40.25px;font-size:19px;color:#111;font-family:'Liberation Serif',serif;line-height:1;will-change:transform;-webkit-text-stroke:0.25px #111"><span class="a" style="left:-1.12px;top:0;transform:scaleX(0.674)">1</span><span class="a" style="left:6.12px;top:0;transform:scaleX(0.674)">0</span><span class="a" style="left:13.38px;top:0;transform:scaleX(0.674)">0</span><span class="a" style="left:20.62px;top:0;transform:scaleX(0.674)">0</span><span class="a" style="left:27.88px;top:0;transform:scaleX(0.674)">2</span></div><div class="a" style="left:835px;top:330.42px;height:20px;width:91.0px;font-size:19px;color:#111;font-family:'Liberation Serif',serif;line-height:1;will-change:transform;-webkit-text-stroke:0.25px #111"><span class="a" style="left:-1.12px;top:0;transform:scaleX(0.674)">2</span><span class="a" style="left:6.12px;top:0;transform:scaleX(0.674)">0</span><span class="a" style="left:13.38px;top:0;transform:scaleX(0.674)">2</span><span class="a" style="left:20.62px;top:0;transform:scaleX(0.674)">1</span><span class="a" style="left:29.99px;top:0;transform:scaleX(0.700)">/</span><span class="a" style="left:35.12px;top:0;transform:scaleX(0.674)">7</span><span class="a" style="left:44.49px;top:0;transform:scaleX(0.700)">/</span><span class="a" style="left:49.62px;top:0;transform:scaleX(0.674)">2</span><span class="a" style="left:56.88px;top:0;transform:scaleX(0.674)">1</span><span class="a" style="left:71.38px;top:0;transform:scaleX(0.674)">1</span><span class="a" style="left:78.62px;top:0;transform:scaleX(0.674)">7</span></div><div class="a" style="left:301px;top:344.99px;height:20px;width:134.5px;font-size:19px;color:#111;font-family:'Liberation Serif',serif;line-height:1;will-change:transform;-webkit-text-stroke:0.25px #111"><span class="a" style="left:-1.12px;top:0;transform:scaleX(0.674)">0</span><span class="a" style="left:6.12px;top:0;transform:scaleX(0.674)">0</span><span class="a" style="left:13.38px;top:0;transform:scaleX(0.674)">1</span><span class="a" style="left:20.62px;top:0;transform:scaleX(0.674)">2</span><span class="a" style="left:27.88px;top:0;transform:scaleX(0.674)">8</span><span class="a" style="left:35.12px;top:0;transform:scaleX(0.674)">0</span><span class="a" style="left:42.38px;top:0;transform:scaleX(0.674)">0</span><span class="a" style="left:49.62px;top:0;transform:scaleX(0.674)">0</span><span class="a" style="left:56.88px;top:0;transform:scaleX(0.674)">0</span><span class="a" style="left:64.12px;top:0;transform:scaleX(0.674)">0</span><span class="a" style="left:69.26px;top:0;transform:scaleX(0.466)">Q</span><span class="a" style="left:79.68px;top:0;transform:scaleX(0.700)">s</span><span class="a" style="left:83.76px;top:0;transform:scaleX(0.466)">Y</span><span class="a" style="left:89.43px;top:0;transform:scaleX(0.379)">M</span><span class="a" style="left:99.84px;top:0;transform:scaleX(0.606)">F</span><span class="a" style="left:105.51px;top:0;transform:scaleX(0.466)">A</span><span class="a" style="left:112.76px;top:0;transform:scaleX(0.466)">A</span><span class="a" style="left:122.12px;top:0;transform:scaleX(0.674)">3</span></div><div class="a" style="left:479px;top:344.99px;height:20px;width:105.5px;font-size:19px;color:#111;font-family:'Liberation Serif',serif;line-height:1;will-change:transform;-webkit-text-stroke:0.25px #111"><span class="a" style="left:-1.66px;top:0;transform:scaleX(0.606)">S</span><span class="a" style="left:6.66px;top:0;transform:scaleX(0.700)">a</span><span class="a" style="left:10.74px;top:0;transform:scaleX(0.433)">m</span><span class="a" style="left:20.62px;top:0;transform:scaleX(0.674)">p</span><span class="a" style="left:29.99px;top:0;transform:scaleX(0.700)">l</span><span class="a" style="left:35.66px;top:0;transform:scaleX(0.700)">e</span><span class="a" style="left:48.04px;top:0;transform:scaleX(0.505)">C</span><span class="a" style="left:56.88px;top:0;transform:scaleX(0.674)">o</span><span class="a" style="left:61.49px;top:0;transform:scaleX(0.433)">m</span><span class="a" style="left:71.38px;top:0;transform:scaleX(0.674)">p</span><span class="a" style="left:79.16px;top:0;transform:scaleX(0.700)">a</span><span class="a" style="left:85.88px;top:0;transform:scaleX(0.674)">n</span><span class="a" style="left:93.12px;top:0;transform:scaleX(0.674)">y</span></div><div class="a" style="left:657px;top:344.99px;height:20px;width:40.25px;font-size:19px;color:#111;font-family:'Liberation Serif',serif;line-height:1;will-change:transform;-webkit-text-stroke:0.25px #111"><span class="a" style="left:-1.12px;top:0;transform:scaleX(0.674)">1</span><span class="a" style="left:6.12px;top:0;transform:scaleX(0.674)">0</span><span class="a" style="left:13.38px;top:0;transform:scaleX(0.674)">0</span><span class="a" style="left:20.62px;top:0;transform:scaleX(0.674)">0</span><span class="a" style="left:27.88px;top:0;transform:scaleX(0.674)">2</span></div><div class="a" style="left:835px;top:344.99px;height:20px;width:91.0px;font-size:19px;color:#111;font-family:'Liberation Serif',serif;line-height:1;will-change:transform;-webkit-text-stroke:0.25px #111"><span class="a" style="left:-1.12px;top:0;transform:scaleX(0.674)">2</span><span class="a" style="left:6.12px;top:0;transform:scaleX(0.674)">0</span><span class="a" style="left:13.38px;top:0;transform:scaleX(0.674)">2</span><span class="a" style="left:20.62px;top:0;transform:scaleX(0.674)">1</span><span class="a" style="left:29.99px;top:0;transform:scaleX(0.700)">/</span><span class="a" style="left:35.12px;top:0;transform:scaleX(0.674)">7</span><span class="a" style="left:44.49px;top:0;transform:scaleX(0.700)">/</span><span class="a" style="left:49.62px;top:0;transform:scaleX(0.674)">2</span><span class="a" style="left:56.88px;top:0;transform:scaleX(0.674)">1</span><span class="a" style="left:71.38px;top:0;transform:scaleX(0.674)">1</span><span class="a" style="left:78.62px;top:0;transform:scaleX(0.674)">7</span></div></div></div><div class="a" style="left:936px;top:77px;width:264px;height:641px;background:#f0f0f0;"></div><div class="a" style="left:936px;top:77px;width:262px;height:1px;background:#a8a8a8;"></div><div class="a" style="left:936px;top:78px;width:7px;height:640px;background:#f6f6f6;"></div><div class="a" style="left:943px;top:78px;width:1px;height:640px;background:#8c8c8c;"></div><div class="a" style="left:1197px;top:77px;width:1px;height:641px;background:#9c9c9c;"></div><div class="a" style="left:1198px;top:77px;width:2px;height:641px;background:#fff;"></div><div class="a" style="left:940px;top:389px;width:1px;height:1px;background:#777;"></div><div class="a" style="left:940px;top:392px;width:1px;height:1px;background:#777;"></div><div class="a" style="left:940px;top:395px;width:1px;height:1px;background:#777;"></div><div class="a" style="left:940px;top:398px;width:1px;height:1px;background:#777;"></div><div class="a" style="left:940px;top:401px;width:1px;height:1px;background:#777;"></div><div class="a" style="left:940px;top:404px;width:1px;height:1px;background:#777;"></div><svg style="left:938px;top:382px;" width="4" height="3" viewBox="0 0 4 3"><path d="M2 0l2 3H0z" fill="#666"/></svg><svg style="left:938px;top:409px;" width="4" height="3" viewBox="0 0 4 3"><path d="M2 0l2 3H0z" fill="#666"/></svg><div class="a" style="left:944px;top:78px;width:218px;height:638px;background:#efefef;"></div><div class="a" style="left:944px;top:78px;width:1px;height:638px;background:#fafafa;"></div><div class="a" style="left:946px;top:80px;width:216px;height:634px;background:#efefef;border-left:1px solid #f6f6f6;border-top:1px solid #f6f6f6"></div><div class="a" style="left:1161px;top:78px;width:1px;height:638px;background:#e6e6e6;"></div><div class="t" id="t14" style="left:957px;top:89px;font-size:11px;color:#1a1a1a;transform:scaleX(0.6970);"><b>プロパティー</b></div><svg style="left:1149px;top:88px;" width="8" height="8" viewBox="0 0 8 8"><path d="M.7 .7l6.6 6.6M7.3 .7L.7 7.3" stroke="#333" stroke-width="1.5"/></svg><div class="a" style="left:947px;top:106px;width:214px;height:22px;background:linear-gradient(#e2e2e2,#ececec);"></div><svg style="left:952px;top:113px;" width="8" height="8" viewBox="0 0 8 8"><rect x=".5" y=".5" width="7" height="7" fill="#fafafa" stroke="#555"/><path d="M2 4h4" stroke="#333"/></svg><div class="t" id="t15" style="left:965px;top:113px;font-size:11px;color:#1a1a1a;transform:scaleX(0.7045);"><b>テキスト</b></div><div class="a" style="left:1147px;top:118px;width:2px;height:2px;background:#9a9a9a;"></div><div class="a" style="left:1151px;top:118px;width:2px;height:2px;background:#9a9a9a;"></div><div class="a" style="left:1155px;top:118px;width:2px;height:2px;background:#9a9a9a;"></div><div class="a" style="left:953px;top:132px;width:149px;height:21px;background:#fff;border:1px solid #a6a6a6"></div><div class="a" style="left:1086px;top:133px;width:15px;height:19px;background:#c9c9c9;"></div><svg style="left:1090px;top:141px;" width="7" height="4" viewBox="0 0 7 4"><path d="M.5 .5l3 3 3-3" stroke="#9a9a9a" fill="none"/></svg><div class="a" style="left:1107px;top:132px;width:49px;height:21px;background:#fff;border:1px solid #a4b8d4"></div><div class="a" style="left:1138px;top:133px;width:17px;height:19px;background:#c9c9c9;"></div><svg style="left:1143px;top:141px;" width="7" height="4" viewBox="0 0 7 4"><path d="M.5 .5l3 3 3-3" stroke="#9a9a9a" fill="none"/></svg><div class="a" style="left:954px;top:163px;width:125px;height:25px;background:#f9f9f9;box-shadow:0 0 0 1px #ededed inset, 1px 1px 1px #e2e2e2"></div><div class="a" style="left:1108px;top:163px;width:47px;height:25px;background:#f9f9f9;box-shadow:0 0 0 1px #ededed inset, 1px 1px 1px #e2e2e2"></div><svg style="left:960px;top:170px;" width="10" height="11" viewBox="0 0 10 11"><text x="0" y="10" font-size="12" font-weight="bold" fill="#b4b4b4" font-family="Liberation Sans">B</text></svg><svg style="left:985px;top:170px;" width="8" height="11" viewBox="0 0 8 11"><text x="0" y="10" font-size="12" font-style="italic" fill="#b4b4b4" font-family="Liberation Serif">I</text></svg><svg style="left:1005px;top:169px;" width="10" height="13" viewBox="0 0 10 13"><text x="0" y="10" font-size="11" fill="#b4b4b4" font-family="Liberation Sans">U</text><rect x="0" y="12" width="9" height="1" fill="#b4b4b4"/></svg><svg style="left:1026px;top:174px;" width="5" height="3" viewBox="0 0 5 3"><path d="M0 0h5l-2.5 3z" fill="#a0a0a0"/></svg><svg style="left:1036px;top:171px;" width="16" height="8" viewBox="0 0 16 8"><text x="0" y="7" font-size="7" fill="#b8b8b8" font-family="Liberation Sans">ABC</text><rect x="0" y="3.5" width="15" height="1" fill="#b8b8b8"/></svg><svg style="left:1059px;top:169px;" width="10" height="12" viewBox="0 0 10 12"><path d="M1 11L5 1l4 10M2.5 7h5" stroke="#b8b8b8" stroke-width="1.1" fill="none"/></svg><svg style="left:1112px;top:168px;" width="16" height="15" viewBox="0 0 16 15"><path d="M1 1v13M3 1v13" stroke="#c0c0c0" stroke-width="1.2"/><path d="M5 14l4-9 4 9M6.5 11h5" stroke="#b0b0b0" stroke-width="1.3" fill="none"/><path d="M10 4l4-2" stroke="#b8b8b8" stroke-width="1.5"/></svg><svg style="left:1134px;top:168px;" width="16" height="15" viewBox="0 0 16 15"><path d="M1 3v11M3 3v11" stroke="#c0c0c0" stroke-width="1.2"/><path d="M5 14l4-8 4 8M6.5 11.5h5" stroke="#b0b0b0" stroke-width="1.3" fill="none"/><path d="M7 1h5l-2.5 2.5z" fill="#b8b8b8"/></svg><div class="a" style="left:954px;top:199px;width:47px;height:27px;background:#f9f9f9;box-shadow:0 0 0 1px #ededed inset, 1px 1px 1px #e2e2e2"></div><div class="a" style="left:1011px;top:199px;width:34px;height:27px;background:#f9f9f9;box-shadow:0 0 0 1px #ededed inset, 1px 1px 1px #e2e2e2"></div><div class="a" style="left:1065px;top:199px;width:34px;height:27px;background:#f9f9f9;box-shadow:0 0 0 1px #ededed inset, 1px 1px 1px #e2e2e2"></div><div class="a" style="left:1107px;top:199px;width:34px;height:27px;background:#f9f9f9;box-shadow:0 0 0 1px #ededed inset, 1px 1px 1px #e2e2e2"></div><svg style="left:958px;top:204px;" width="15" height="15" viewBox="0 0 15 15"><path d="M1 12L5 2l4 10M2.5 8h5" stroke="#b8b8b8" stroke-width="1.2" fill="none"/><path d="M8 10l3-7 3 7M9 8h4" stroke="#b0b0b0" stroke-width="1.2" fill="none"/><path d="M9 13q2 2 5 0" stroke="#c0c0c0" fill="none"/></svg><svg style="left:980px;top:204px;" width="15" height="15" viewBox="0 0 15 15"><path d="M1 12L5 2l4 10M2.5 8h5" stroke="#b8b8b8" stroke-width="1.2" fill="none"/><path d="M8 13l3-6 3 6M9 11h4" stroke="#b0b0b0" stroke-width="1.2" fill="none"/><path d="M9 3q2-2 4 0" stroke="#c0c0c0" fill="none"/></svg><svg style="left:1016px;top:204px;" width="15" height="15" viewBox="0 0 15 15"><path d="M1 2l2 6 2-6M6 2l2 6 2-6M10 2v6" stroke="#bcbcbc" stroke-width="1" fill="none"/><path d="M1 11h13M1 11l2-2M1 11l2 2M14 11l-2-2M14 11l-2 2" stroke="#c0c0c0" stroke-width="1.2" fill="none"/></svg><svg style="left:1035px;top:211px;" width="5" height="3" viewBox="0 0 5 3"><path d="M0 0h5l-2.5 3z" fill="#a0a0a0"/></svg><svg style="left:1069px;top:203px;" width="14" height="16" viewBox="0 0 14 16"><path d="M2 10l5-9 5 9M4 7h6" stroke="#b8b8b8" stroke-width="1.5" fill="none"/><rect x="0" y="12" width="14" height="3" fill="#bdbdbd"/></svg><svg style="left:1088px;top:211px;" width="5" height="3" viewBox="0 0 5 3"><path d="M0 0h5l-2.5 3z" fill="#a0a0a0"/></svg><svg style="left:1111px;top:204px;" width="16" height="15" viewBox="0 0 16 15"><text x="0" y="8" font-size="8" fill="#b8b8b8" font-family="Liberation Sans">ab</text><path d="M9 9l5-6 1.5 1.5-5 6z" fill="#c6c6c6"/><rect x="0" y="11" width="14" height="3" fill="#c0c0c0"/></svg><svg style="left:1130px;top:211px;" width="5" height="3" viewBox="0 0 5 3"><path d="M0 0h5l-2.5 3z" fill="#a0a0a0"/></svg><div class="a" style="left:947px;top:229px;width:214px;height:22px;background:linear-gradient(#e2e2e2,#ececec);"></div><svg style="left:952px;top:236px;" width="8" height="8" viewBox="0 0 8 8"><rect x=".5" y=".5" width="7" height="7" fill="#fafafa" stroke="#555"/><path d="M2 4h4" stroke="#333"/></svg><div class="t" id="t16" style="left:965px;top:236px;font-size:11px;color:#1a1a1a;transform:scaleX(1.0000);"><b>段落</b></div><div class="a" style="left:1147px;top:241px;width:2px;height:2px;background:#9a9a9a;"></div><div class="a" style="left:1151px;top:241px;width:2px;height:2px;background:#9a9a9a;"></div><div class="a" style="left:1155px;top:241px;width:2px;height:2px;background:#9a9a9a;"></div><div class="a" style="left:954px;top:254px;width:92px;height:27px;background:#f9f9f9;box-shadow:0 0 0 1px #ededed inset, 1px 1px 1px #e2e2e2"></div><svg style="left:960px;top:262px;" width="11" height="10" viewBox="0 0 11 10"><path d="M0 1h11M0 3.6h8M0 6.2h11M0 8.8h11" stroke="#4a4a4a" stroke-width="1.4"/></svg><svg style="left:983px;top:262px;" width="11" height="10" viewBox="0 0 11 10"><path d="M0 1h11M2 3.6h7M0 6.2h11M0 8.8h11" stroke="#4a4a4a" stroke-width="1.4"/></svg><svg style="left:1006px;top:262px;" width="11" height="10" viewBox="0 0 11 10"><path d="M0 1h11M3 3.6h8M0 6.2h11M0 8.8h11" stroke="#4a4a4a" stroke-width="1.4"/></svg><svg style="left:1029px;top:262px;" width="11" height="10" viewBox="0 0 11 10"><path d="M0 1h11M0 3.6h11M0 6.2h11M0 8.8h11" stroke="#4a4a4a" stroke-width="1.4"/></svg><div class="a" style="left:954px;top:286px;width:67px;height:27px;background:#f9f9f9;box-shadow:0 0 0 1px #ededed inset, 1px 1px 1px #e2e2e2"></div><div class="a" style="left:1042px;top:286px;width:47px;height:27px;background:#f9f9f9;box-shadow:0 0 0 1px #ededed inset, 1px 1px 1px #e2e2e2"></div><svg style="left:959px;top:294px;" width="14" height="10" viewBox="0 0 14 10"><circle cx="2" cy="2" r="1.6" fill="#6a7a8a"/><circle cx="2" cy="8" r="1.6" fill="#6a7a8a"/><path d="M5 1.5h8M5 3h5M5 7.5h8M5 9h5" stroke="#505050" stroke-width="1"/></svg><svg style="left:978px;top:298px;" width="5" height="3" viewBox="0 0 5 3"><path d="M0 0h5l-2.5 3z" fill="#111"/></svg><svg style="left:992px;top:293px;" width="14" height="11" viewBox="0 0 14 11"><text x="0" y="5" font-size="5" fill="#4a6a9a" font-family="Liberation Serif">I</text><text x="0" y="10.5" font-size="5" fill="#4a6a9a" font-family="Liberation Serif">II</text><path d="M5 2h8M5 3.5h5M5 8h8M5 9.5h5" stroke="#505050"/></svg><svg style="left:1011px;top:298px;" width="5" height="3" viewBox="0 0 5 3"><path d="M0 0h5l-2.5 3z" fill="#111"/></svg><svg style="left:1045px;top:291px;" width="13" height="14" viewBox="0 0 13 14"><path d="M2 6l5-4 5 5-5 5z" fill="#a8c4e8" stroke="#4a6aa0"/><circle cx="5" cy="2.5" r="2" fill="#5a7ab0"/><path d="M11 8q1.5 3 0 5" stroke="#333" stroke-width="1.3" fill="none"/></svg><div class="a" style="left:1059px;top:292px;width:14px;height:15px;background:#fff;border:2px solid #444;box-shadow:inset 0 0 0 1px #bbb"></div><svg style="left:1080px;top:298px;" width="5" height="3" viewBox="0 0 5 3"><path d="M0 0h5l-2.5 3z" fill="#111"/></svg><div class="t" id="t17" style="left:953px;top:318px;font-size:11px;color:#1e1e1e;transform:scaleX(0.9308);">間隔(<u>S</u>):</div><div class="t" id="t18" style="left:1060px;top:318px;font-size:11px;color:#1e1e1e;transform:scaleX(0.7741);">インデント(<u>I</u>):</div><div class="a" style="left:954px;top:333px;width:47px;height:26px;background:#f9f9f9;box-shadow:0 0 0 1px #ededed inset, 1px 1px 1px #e2e2e2"></div><div class="a" style="left:1060px;top:333px;width:76px;height:26px;background:#f9f9f9;box-shadow:0 0 0 1px #ededed inset, 1px 1px 1px #e2e2e2"></div><svg style="left:959px;top:340px;" width="14" height="13" viewBox="0 0 14 13"><path d="M3 3l2-2 2 2M3 10l2 2 2-2" stroke="#c4c4c4" fill="#e0e0e0"/><path d="M8 2h6M8 4.5h6M8 8.5h6M8 11h6" stroke="#c8c8c8"/></svg><svg style="left:981px;top:340px;" width="14" height="13" viewBox="0 0 14 13"><path d="M3 1l2 2 2-2M3 12l2-2 2 2" stroke="#c4c4c4" fill="#e0e0e0"/><path d="M8 2h6M8 4.5h6M8 8.5h6M8 11h6" stroke="#c8c8c8"/></svg><svg style="left:1065px;top:340px;" width="14" height="13" viewBox="0 0 14 13"><path d="M6 3h8M9 5.5h5M9 8h5M6 10.5h8M1 6.5h6M3 4.5l-2 2 2 2" stroke="#c8c8c8" fill="none"/></svg><svg style="left:1087px;top:340px;" width="14" height="13" viewBox="0 0 14 13"><path d="M6 3h8M9 5.5h5M9 8h5M6 10.5h8M1 6.5h6M5 4.5l2 2-2 2" stroke="#c8c8c8" fill="none"/></svg><svg style="left:1109px;top:340px;" width="16" height="13" viewBox="0 0 16 13"><path d="M8 1h6v12M11 4v9M1 5h6M3 3l-2 2 2 2" stroke="#c8c8c8" fill="none"/></svg><div class="a" style="left:972px;top:370px;width:83px;height:21px;background:#fff;border:1px solid #b6b6b6"></div><div class="a" style="left:1039px;top:371px;width:15px;height:19px;background:#f4f4f4;border-left:1px solid #e2e2e2"></div><svg style="left:1044px;top:375px;" width="5" height="3" viewBox="0 0 5 3"><path d="M2.5 0l2.5 3H0z" fill="#6a6a6a"/></svg><svg style="left:1044px;top:383px;" width="5" height="3" viewBox="0 0 5 3"><path d="M0 0h5L2.5 3z" fill="#6a6a6a"/></svg><div class="t" id="t19" style="left:975px;top:376px;font-size:11px;color:#9c9c9c;transform:scaleX(0.9198);">0.00 cm</div><div class="a" style="left:1079px;top:370px;width:77px;height:21px;background:#fff;border:1px solid #b6b6b6"></div><div class="a" style="left:1140px;top:371px;width:15px;height:19px;background:#f4f4f4;border-left:1px solid #e2e2e2"></div><svg style="left:1145px;top:375px;" width="5" height="3" viewBox="0 0 5 3"><path d="M2.5 0l2.5 3H0z" fill="#6a6a6a"/></svg><svg style="left:1145px;top:383px;" width="5" height="3" viewBox="0 0 5 3"><path d="M0 0h5L2.5 3z" fill="#6a6a6a"/></svg><div class="t" id="t20" style="left:1082px;top:376px;font-size:11px;color:#9c9c9c;transform:scaleX(0.9198);">0.00 cm</div><div class="a" style="left:972px;top:398px;width:83px;height:21px;background:#fff;border:1px solid #b6b6b6"></div><div class="a" style="left:1039px;top:399px;width:15px;height:19px;background:#f4f4f4;border-left:1px solid #e2e2e2"></div><svg style="left:1044px;top:403px;" width="5" height="3" viewBox="0 0 5 3"><path d="M2.5 0l2.5 3H0z" fill="#6a6a6a"/></svg><svg style="left:1044px;top:411px;" width="5" height="3" viewBox="0 0 5 3"><path d="M0 0h5L2.5 3z" fill="#6a6a6a"/></svg><div class="t" id="t21" style="left:975px;top:404px;font-size:11px;color:#9c9c9c;transform:scaleX(0.9198);">0.00 cm</div><div class="a" style="left:1079px;top:398px;width:77px;height:21px;background:#fff;border:1px solid #b6b6b6"></div><div class="a" style="left:1140px;top:399px;width:15px;height:19px;background:#f4f4f4;border-left:1px solid #e2e2e2"></div><svg style="left:1145px;top:403px;" width="5" height="3" viewBox="0 0 5 3"><path d="M2.5 0l2.5 3H0z" fill="#6a6a6a"/></svg><svg style="left:1145px;top:411px;" width="5" height="3" viewBox="0 0 5 3"><path d="M0 0h5L2.5 3z" fill="#6a6a6a"/></svg><div class="t" id="t22" style="left:1082px;top:404px;font-size:11px;color:#9c9c9c;transform:scaleX(0.9198);">0.00 cm</div><div class="a" style="left:1079px;top:427px;width:77px;height:21px;background:#fff;border:1px solid #b6b6b6"></div><div class="a" style="left:1140px;top:428px;width:15px;height:19px;background:#f4f4f4;border-left:1px solid #e2e2e2"></div><svg style="left:1145px;top:432px;" width="5" height="3" viewBox="0 0 5 3"><path d="M2.5 0l2.5 3H0z" fill="#6a6a6a"/></svg><svg style="left:1145px;top:440px;" width="5" height="3" viewBox="0 0 5 3"><path d="M0 0h5L2.5 3z" fill="#6a6a6a"/></svg><div class="t" id="t23" style="left:1082px;top:433px;font-size:11px;color:#9c9c9c;transform:scaleX(0.9198);">0.00 cm</div><svg style="left:954px;top:374px;" width="13" height="15" viewBox="0 0 13 15"><path d="M5 .5h3M6.5 .5v5M5 5.5h3" stroke="#333" stroke-width=".9"/><path d="M0 7.5h13M0 10.5h13M0 13.5h13" stroke="#3a5a90" stroke-width="1.6"/></svg><svg style="left:954px;top:402px;" width="13" height="15" viewBox="0 0 13 15"><path d="M0 1h13M0 4h13M0 7h13" stroke="#3a5a90" stroke-width="1.6"/><path d="M5 9.5h3M6.5 9.5v5M5 14.5h3" stroke="#333" stroke-width=".9"/></svg><svg style="left:1061px;top:374px;" width="14" height="15" viewBox="0 0 14 15"><path d="M0 1.5v3M0 3h5M5 1.5v3" stroke="#333" stroke-width=".9"/><path d="M8 3h6M8 6h6M8 9h6M8 12h6M8 14.5h6" stroke="#3a5a90" stroke-width="1.6"/></svg><svg style="left:1061px;top:402px;" width="14" height="15" viewBox="0 0 14 15"><path d="M0 3h6M0 6h6M0 9h6M0 12h6M0 14.5h6" stroke="#3a5a90" stroke-width="1.6"/><path d="M8 1.5v3M8 3h5M13 1.5v3" stroke="#333" stroke-width=".9"/></svg><svg style="left:1061px;top:431px;" width="14" height="15" viewBox="0 0 14 15"><path d="M0 1h14M5 4h9M0 7h14M0 10h14M0 13h14" stroke="#3a5a90" stroke-width="1.6"/></svg><div class="a" style="left:954px;top:425px;width:36px;height:28px;background:#f9f9f9;box-shadow:0 0 0 1px #ededed inset, 1px 1px 1px #e2e2e2"></div><svg style="left:957px;top:432px;" width="17" height="13" viewBox="0 0 17 13"><path d="M3 1v11M1 3l2-2 2 2M1 10l2 2 2-2" stroke="#3a4a6a" stroke-width="1.3" fill="none"/><path d="M7 3h10M7 6.5h10M7 10h10" stroke="#3a5a90" stroke-width="1.8"/></svg><svg style="left:980px;top:438px;" width="5" height="3" viewBox="0 0 5 3"><path d="M0 0h5l-2.5 3z" fill="#111"/></svg><svg style="left:1173px;top:88px;" width="16" height="15" viewBox="0 0 16 15"><path d="M0 1h15M0 4.5h15M0 8h15" stroke="#3a3a3a" stroke-width="1.6"/><path d="M7 11h8l-4 4z" fill="#111"/></svg><div class="a" style="left:1166px;top:116px;width:30px;height:29px;background:#f6f6f6;border:1px solid #b4b4b4;border-radius:3px"></div><svg style="left:1172px;top:119px;" width="19" height="21" viewBox="0 0 19 21"><path d="M2 2l4-2 4 2-4 2z" fill="#8fd8ff"/><path d="M2 2v5l4 2v-5z" fill="#1a88e0"/><path d="M10 2v5l-4 2v-5z" fill="#0a6ac0"/><path d="M10 4l4-2 4 2-4 2z" fill="#c8f080"/><path d="M10 4v5l4 2v-5z" fill="#68c020"/><path d="M18 4v5l-4 2v-5z" fill="#4aa010"/><path d="M2 11l4-2 4 2-4 2z" fill="#8fd8ff"/><path d="M2 11v5l4 2v-5z" fill="#1a88e0"/><path d="M10 11v5l-4 2v-5z" fill="#0a6ac0"/><path d="M10 13l4-2 4 2-4 2z" fill="#c8f080"/><path d="M10 13v5l4 2v-5z" fill="#78d030"/><path d="M18 13v5l-4 2v-5z" fill="#58b018"/><path d="M6 8l4-2 4 2-4 2z" fill="#c8f080"/><path d="M6 8v5l4 2v-5z" fill="#70c828"/><path d="M14 8v5l-4 2v-5z" fill="#50a818"/></svg><svg style="left:1171px;top:152px;" width="21" height="21" viewBox="0 0 21 21"><circle cx="4" cy="10" r="2" fill="#e050a0"/><circle cx="17" cy="4" r="2.5" fill="#f0d030"/><circle cx="11" cy="2.5" r="2" fill="#c050e0"/><path d="M4 5q3-3 6 0" stroke="#d07020" stroke-width="2.5" fill="none"/><path d="M3 19L9 6l8 10z" fill="#1a6ab8"/><path d="M9 6l8 10-3 1z" fill="#0a3a70"/><circle cx="17" cy="13" r="2.5" fill="#50b040"/><circle cx="19" cy="9" r="1.5" fill="#e04040"/></svg><svg style="left:1171px;top:184px;" width="21" height="21" viewBox="0 0 21 21"><path d="M1 8.5l14-7 5.5 11-14 7z" fill="#f8fbff" stroke="#9ab8a0" stroke-width="1"/><path d="M3.5 9l10-5 4 8-10 5z" fill="#58b4ec"/><path d="M6.5 15.5l3.5-4 3 1.5 1.5-2 3 1.5-10 5z" fill="#58a838"/><path d="M9 11l2-2 2 2v2h-4z" fill="#fff" stroke="#b06020" stroke-width=".6"/><path d="M3 5l4-2" stroke="#78c040" stroke-width="2"/><ellipse cx="11" cy="20" rx="6" ry="1" fill="#d8d8d8"/></svg><svg style="left:1170px;top:215px;" width="22" height="22" viewBox="0 0 22 22"><circle cx="11" cy="11.5" r="9.2" fill="#fffdf6" stroke="#eca428" stroke-width="2.2"/><path d="M16.5 5.5L12.2 12.7 9.8 10.3z" fill="#e23a28"/><path d="M5.5 17.5L9.8 10.3 12.2 12.7z" fill="#3a72d8"/><circle cx="11" cy="11.5" r="1" fill="#fff"/><text x="11" y="6.8" text-anchor="middle" font-size="5.5" font-weight="bold" fill="#2a2a2a" font-family="Liberation Sans">N</text></svg><div class="a" style="left:1px;top:717px;width:1199px;height:29px;background:#fff;"></div><div class="a" style="left:1px;top:717px;width:935px;height:1px;background:#e4e4e4;"></div><div class="a" style="left:936px;top:717px;width:262px;height:1px;background:#9a9a9a;"></div><div class="a" style="left:4px;top:723px;width:1px;height:1px;background:#7a7a7a;"></div><div class="a" style="left:4px;top:726px;width:1px;height:1px;background:#7a7a7a;"></div><div class="a" style="left:4px;top:729px;width:1px;height:1px;background:#7a7a7a;"></div><div class="a" style="left:4px;top:732px;width:1px;height:1px;background:#7a7a7a;"></div><div class="a" style="left:4px;top:735px;width:1px;height:1px;background:#7a7a7a;"></div><div class="a" style="left:4px;top:738px;width:1px;height:1px;background:#7a7a7a;"></div><svg style="left:19px;top:724px;" width="8" height="13" viewBox="0 0 8 13"><path d="M.7 .7v10.5l2.6-2.4 2 3.6 1.6-.9-2-3.5h3.4z" fill="#f8f8f8" stroke="#c4c4c4"/></svg><svg style="left:38px;top:724px;" width="15" height="14" viewBox="0 0 15 14"><path d="M1 13.5h13" stroke="#cfcfcf" stroke-width="1.4"/><path d="M1.5 2v11M1.5 8l6 5" stroke="#cacaca" stroke-width="1.3"/><path d="M6 10l6-7 2 2-6 7-3 1z" fill="#e8e8e8" stroke="#c6c6c6"/></svg><div class="a" style="left:60px;top:724px;width:1px;height:16px;background:#cfcfcf;"></div><svg style="left:68px;top:724px;" width="15" height="15" viewBox="0 0 15 15"><rect x="6.5" y=".5" width="8" height="6" rx="1" fill="#f6f6f6" stroke="#cfcfcf"/><rect x=".5" y="5.5" width="8" height="9" rx="1" fill="#f2f2f2" stroke="#c8c8c8"/><circle cx="11.5" cy="12" r="2" fill="#e4e4e4" stroke="#cacaca"/></svg><svg style="left:91px;top:724px;" width="15" height="15" viewBox="0 0 15 15"><rect x=".5" y=".5" width="12" height="12" fill="#f6f6f6" stroke="#cdcdcd"/><rect x=".5" y=".5" width="12" height="3" fill="#dedede"/><rect x="6.5" y="5.5" width="8" height="9" fill="#f2f2f2" stroke="#c8c8c8"/></svg><div class="a" style="left:113px;top:724px;width:1px;height:16px;background:#cfcfcf;"></div><svg style="left:120px;top:727px;" width="16" height="10" viewBox="0 0 16 10"><rect x=".5" y=".5" width="15" height="9" fill="#f4f4f4" stroke="#d0d0d0"/><text x="8" y="7.5" text-anchor="middle" font-size="6.5" font-weight="bold" fill="#b8b8b8" font-family="Liberation Serif">XML</text></svg><svg style="left:143px;top:724px;" width="15" height="14" viewBox="0 0 15 14"><rect x=".5" y="2.5" width="12" height="11" fill="#f6f6f6" stroke="#cdcdcd"/><path d="M3 6h5M3 9h5" stroke="#d0d0d0"/><path d="M8 8l5-6 2 1.5-5 6z" fill="#e4e4e4" stroke="#c4c4c4"/></svg><svg style="left:166px;top:726px;" width="15" height="12" viewBox="0 0 15 12"><rect x=".5" y=".5" width="14" height="11" fill="#fafafa" stroke="#cfcfcf"/><path d="M.5 4h14M.5 8h14M5 .5v11M10 .5v11" stroke="#d4d4d4"/></svg><svg style="left:189px;top:724px;" width="14" height="15" viewBox="0 0 14 15"><rect x=".5" y=".5" width="6" height="6" fill="#f4f4f4" stroke="#c8c8c8"/><path d="M2 3l1.5 1.5L6 2" stroke="#bbb" fill="none"/><path d="M3 7v5h5" stroke="#c8c8c8" fill="none"/><circle cx="11" cy="12" r="2.5" fill="#e6e6e6" stroke="#c6c6c6"/></svg><div class="a" style="left:211px;top:724px;width:1px;height:16px;background:#cfcfcf;"></div><svg style="left:218px;top:724px;" width="17" height="15" viewBox="0 0 17 15"><path d="M1 4h5l1.5 1.5H13v8.5H1z" fill="#e8a820" stroke="#9a6a10"/><path d="M1 14l2.5-6h12l-2.5 6z" fill="#f8cc50" stroke="#a87418"/><path d="M6 10l7-8 2 2-7 8-3 1z" fill="#f0d080" stroke="#7a5a20" stroke-width=".8"/><circle cx="14.5" cy="2" r="1.8" fill="#e04060"/></svg><svg style="left:242px;top:724px;" width="15" height="15" viewBox="0 0 15 15"><rect x=".5" y=".5" width="14" height="11" fill="#f0f0f0" stroke="#333" stroke-width="1.2"/><rect x="3" y="3" width="3" height="6" fill="#fff" stroke="#444"/><path d="M8 4v10l2.5-2 2 3 1.5-1-2-3h3z" fill="#fff" stroke="#111" stroke-width="1"/></svg><div class="a" style="left:264px;top:724px;width:1px;height:16px;background:#cfcfcf;"></div><svg style="left:271px;top:724px;" width="15" height="15" viewBox="0 0 15 15"><path d="M1 1v13M3 1v13M5 4h4M5 10h4" stroke="#cccccc" stroke-width="1.5"/><path d="M9 7l3-3 3 3-3 3z" fill="#d0d0d0"/><path d="M9 7h-3" stroke="#ccc" stroke-width="2"/></svg><svg style="left:293px;top:724px;" width="15" height="15" viewBox="0 0 15 15"><circle cx="7.5" cy="2.5" r="2" fill="none" stroke="#c8c8c8" stroke-width="1.3"/><path d="M7.5 4.5v9.5M4 6.5h7M1 9q1 5 6.5 5t6.5-5" stroke="#c8c8c8" stroke-width="1.6" fill="none"/></svg><svg style="left:315px;top:731px;" width="5" height="3" viewBox="0 0 5 3"><path d="M0 0h5l-2.5 3z" fill="#a8a8a8"/></svg><div class="a" style="left:326px;top:724px;width:1px;height:16px;background:#cfcfcf;"></div><svg style="left:333px;top:724px;" width="15" height="15" viewBox="0 0 15 15"><path d="M1 1v13" stroke="#c8c8c8" stroke-width="1.5"/><rect x="3" y="5" width="5" height="5" fill="#d8d8d8"/><path d="M8 7.5l3-3 3 3-3 3z" fill="#d0d0d0"/></svg><svg style="left:355px;top:731px;" width="5" height="3" viewBox="0 0 5 3"><path d="M0 0h5l-2.5 3z" fill="#a8a8a8"/></svg><div class="a" style="left:366px;top:724px;width:1px;height:16px;background:#cfcfcf;"></div><div class="a" style="left:374px;top:724px;width:1px;height:1px;background:#d0d0d0;"></div><div class="a" style="left:374px;top:727px;width:1px;height:1px;background:#d0d0d0;"></div><div class="a" style="left:374px;top:730px;width:1px;height:1px;background:#d0d0d0;"></div><div class="a" style="left:374px;top:733px;width:1px;height:1px;background:#d0d0d0;"></div><div class="a" style="left:374px;top:736px;width:1px;height:1px;background:#d0d0d0;"></div><div class="a" style="left:377px;top:724px;width:1px;height:1px;background:#d0d0d0;"></div><div class="a" style="left:377px;top:727px;width:1px;height:1px;background:#d0d0d0;"></div><div class="a" style="left:377px;top:730px;width:1px;height:1px;background:#d0d0d0;"></div><div class="a" style="left:377px;top:733px;width:1px;height:1px;background:#d0d0d0;"></div><div class="a" style="left:377px;top:736px;width:1px;height:1px;background:#d0d0d0;"></div><div class="a" style="left:380px;top:724px;width:1px;height:1px;background:#d0d0d0;"></div><div class="a" style="left:380px;top:727px;width:1px;height:1px;background:#d0d0d0;"></div><div class="a" style="left:380px;top:730px;width:1px;height:1px;background:#d0d0d0;"></div><div class="a" style="left:380px;top:733px;width:1px;height:1px;background:#d0d0d0;"></div><div class="a" style="left:380px;top:736px;width:1px;height:1px;background:#d0d0d0;"></div><div class="a" style="left:383px;top:724px;width:1px;height:1px;background:#d0d0d0;"></div><div class="a" style="left:383px;top:727px;width:1px;height:1px;background:#d0d0d0;"></div><div class="a" style="left:383px;top:730px;width:1px;height:1px;background:#d0d0d0;"></div><div class="a" style="left:383px;top:733px;width:1px;height:1px;background:#d0d0d0;"></div><div class="a" style="left:383px;top:736px;width:1px;height:1px;background:#d0d0d0;"></div><div class="a" style="left:386px;top:724px;width:1px;height:1px;background:#d0d0d0;"></div><div class="a" style="left:386px;top:727px;width:1px;height:1px;background:#d0d0d0;"></div><div class="a" style="left:386px;top:730px;width:1px;height:1px;background:#d0d0d0;"></div><div class="a" style="left:386px;top:733px;width:1px;height:1px;background:#d0d0d0;"></div><div class="a" style="left:386px;top:736px;width:1px;height:1px;background:#d0d0d0;"></div><div class="a" style="left:389px;top:724px;width:1px;height:1px;background:#d0d0d0;"></div><div class="a" style="left:389px;top:727px;width:1px;height:1px;background:#d0d0d0;"></div><div class="a" style="left:389px;top:730px;width:1px;height:1px;background:#d0d0d0;"></div><div class="a" style="left:389px;top:733px;width:1px;height:1px;background:#d0d0d0;"></div><div class="a" style="left:389px;top:736px;width:1px;height:1px;background:#d0d0d0;"></div><div class="a" style="left:396px;top:724px;width:1px;height:1px;background:#d0d0d0;"></div><div class="a" style="left:396px;top:727px;width:1px;height:1px;background:#d0d0d0;"></div><div class="a" style="left:396px;top:730px;width:1px;height:1px;background:#d0d0d0;"></div><div class="a" style="left:396px;top:733px;width:1px;height:1px;background:#d0d0d0;"></div><div class="a" style="left:396px;top:736px;width:1px;height:1px;background:#d0d0d0;"></div><div class="a" style="left:399px;top:724px;width:1px;height:1px;background:#d0d0d0;"></div><div class="a" style="left:399px;top:727px;width:1px;height:1px;background:#d0d0d0;"></div><div class="a" style="left:399px;top:730px;width:1px;height:1px;background:#d0d0d0;"></div><div class="a" style="left:399px;top:733px;width:1px;height:1px;background:#d0d0d0;"></div><div class="a" style="left:399px;top:736px;width:1px;height:1px;background:#d0d0d0;"></div><div class="a" style="left:402px;top:724px;width:1px;height:1px;background:#d0d0d0;"></div><div class="a" style="left:402px;top:727px;width:1px;height:1px;background:#d0d0d0;"></div><div class="a" style="left:402px;top:730px;width:1px;height:1px;background:#d0d0d0;"></div><div class="a" style="left:402px;top:733px;width:1px;height:1px;background:#d0d0d0;"></div><div class="a" style="left:402px;top:736px;width:1px;height:1px;background:#d0d0d0;"></div><div class="a" style="left:405px;top:724px;width:1px;height:1px;background:#d0d0d0;"></div><div class="a" style="left:405px;top:727px;width:1px;height:1px;background:#d0d0d0;"></div><div class="a" style="left:405px;top:730px;width:1px;height:1px;background:#d0d0d0;"></div><div class="a" style="left:405px;top:733px;width:1px;height:1px;background:#d0d0d0;"></div><div class="a" style="left:405px;top:736px;width:1px;height:1px;background:#d0d0d0;"></div><div class="a" style="left:408px;top:724px;width:1px;height:1px;background:#d0d0d0;"></div><div class="a" style="left:408px;top:727px;width:1px;height:1px;background:#d0d0d0;"></div><div class="a" style="left:408px;top:730px;width:1px;height:1px;background:#d0d0d0;"></div><div class="a" style="left:408px;top:733px;width:1px;height:1px;background:#d0d0d0;"></div><div class="a" style="left:408px;top:736px;width:1px;height:1px;background:#d0d0d0;"></div><div class="a" style="left:411px;top:724px;width:1px;height:1px;background:#d0d0d0;"></div><div class="a" style="left:411px;top:727px;width:1px;height:1px;background:#d0d0d0;"></div><div class="a" style="left:411px;top:730px;width:1px;height:1px;background:#d0d0d0;"></div><div class="a" style="left:411px;top:733px;width:1px;height:1px;background:#d0d0d0;"></div><div class="a" style="left:411px;top:736px;width:1px;height:1px;background:#d0d0d0;"></div><svg style="left:401px;top:724px;" width="10" height="10" viewBox="0 0 10 10"><path d="M1 9V4q0-3.5 4-3.5T9 4v5" stroke="#c8c8c8" stroke-width="2" fill="none"/></svg><svg style="left:420px;top:724px;" width="13" height="15" viewBox="0 0 13 15"><path d="M3 1v13M10 1v13M0 4h13M0 11h13" stroke="#c8c8c8" stroke-width="1.6"/></svg><div class="a" style="left:444px;top:720px;width:9px;height:23px;background:linear-gradient(#f4f4f4,#9a9a9a);"></div><svg style="left:446px;top:737px;" width="5" height="3" viewBox="0 0 5 3"><path d="M0 0h5l-2.5 3z" fill="#111"/></svg><div class="a" style="left:454px;top:717px;width:1px;height:29px;background:#e4e4e4;"></div><div class="a" style="left:459px;top:723px;width:1px;height:1px;background:#7a7a7a;"></div><div class="a" style="left:459px;top:726px;width:1px;height:1px;background:#7a7a7a;"></div><div class="a" style="left:459px;top:729px;width:1px;height:1px;background:#7a7a7a;"></div><div class="a" style="left:459px;top:732px;width:1px;height:1px;background:#7a7a7a;"></div><div class="a" style="left:459px;top:735px;width:1px;height:1px;background:#7a7a7a;"></div><div class="a" style="left:459px;top:738px;width:1px;height:1px;background:#7a7a7a;"></div><svg style="left:472px;top:725px;" width="9" height="13" viewBox="0 0 9 13"><path d="M.7 .7v10.5l2.6-2.4 2 3.6 1.6-.9-2-3.5h3.4z" fill="#fafafa" stroke="#c0c0c0"/></svg><div class="a" style="left:491px;top:724px;width:1px;height:16px;background:#cfcfcf;"></div><svg style="left:499px;top:725px;" width="15" height="15" viewBox="0 0 15 15"><path d="M1 14L14 1" stroke="#3a70c0" stroke-width="2"/></svg><svg style="left:522px;top:726px;" width="16" height="10" viewBox="0 0 16 10"><rect x=".5" y=".5" width="15" height="9" fill="#5a9ae0" stroke="#1a4a90"/><rect x="1.5" y="1.5" width="13" height="3" fill="#8ec0f0"/></svg><svg style="left:544px;top:726px;" width="16" height="11" viewBox="0 0 16 11"><ellipse cx="8" cy="5.5" rx="7.5" ry="5" fill="#5a9ae0" stroke="#1a4a90"/><ellipse cx="8" cy="4" rx="5" ry="2.5" fill="#90c4f2"/></svg><svg style="left:567px;top:724px;" width="17" height="16" viewBox="0 0 17 16"><path d="M1 13q4-4 6 0t8-2" stroke="#3a70c0" stroke-width="1.8" fill="none"/><path d="M6 10l7-8 2.5 2-7 8-3 1z" fill="#f0c030" stroke="#6a4a10" stroke-width=".8"/><path d="M13 2l1-1 2.5 2-1 1z" fill="#e04040"/></svg><svg style="left:591px;top:725px;" width="13" height="14" viewBox="0 0 13 14"><path d="M.5 .5h12v3.5h-1.5l-1-2H7.8v10.5l2 .5v1H3.2v-1l2-.5V2H3l-1 2H.5z" fill="#2a5a74"/></svg><svg style="left:613px;top:728px;" width="14" height="8" viewBox="0 0 14 8"><path d="M1 0v8M13 0v8M1 4h12" stroke="#2a5a74" stroke-width="2.4"/></svg><svg style="left:635px;top:725px;" width="16" height="15" viewBox="0 0 16 15"><path d="M8 .8c4 0 7 2.4 7 5.5s-3 5.5-7 5.5l-1 0 1 2.5-4-2.8C2 10.5 1 8.500 1 6.3 1 3.2 4 .8 8 .8z" fill="#eef4fa" stroke="#4a5a6a" stroke-width="1.2"/><path d="M4.5 4.5h7M4.5 6.5h7M4.5 8.5h5" stroke="#3a70c0" stroke-width="1.2"/></svg><svg style="left:657px;top:725px;" width="16" height="15" viewBox="0 0 16 15"><path d="M8 .8c4 0 7 2.4 7 5.5s-3 5.5-7 5.5l-1 0 1 2.5-4-2.8C2 10.5 1 8.5 1 6.3 1 3.2 4 .8 8 .8z" fill="#eef4fa" stroke="#4a5a6a" stroke-width="1.2"/><path d="M5 4v4M7 4v4M9 4v4M11 4v3" stroke="#3a70c0" stroke-width="1.2"/></svg><div class="a" style="left:680px;top:724px;width:1px;height:16px;background:#cfcfcf;"></div><svg style="left:688px;top:724px;" width="14" height="15" viewBox="0 0 14 15"><path d="M7 .5l6.5 7-6.5 7-6.5-7z" fill="#e6e6e6" stroke="#d0d0d0"/></svg><svg style="left:709px;top:731px;" width="5" height="3" viewBox="0 0 5 3"><path d="M0 0h5l-2.5 3z" fill="#a8a8a8"/></svg><svg style="left:720px;top:724px;" width="15" height="15" viewBox="0 0 15 15"><circle cx="7.5" cy="7.5" r="7" fill="#e4e4e4" stroke="#d0d0d0"/><circle cx="5" cy="6" r="1" fill="#ccc"/><circle cx="10" cy="6" r="1" fill="#ccc"/><path d="M4 9.5q3.5 3 7 0" stroke="#ccc" fill="none"/></svg><svg style="left:741px;top:731px;" width="5" height="3" viewBox="0 0 5 3"><path d="M0 0h5l-2.5 3z" fill="#a8a8a8"/></svg><svg style="left:753px;top:726px;" width="15" height="10" viewBox="0 0 15 10"><path d="M1 5l4-4v2h5V1l4 4-4 4V7H5v2z" fill="#e6e6e6" stroke="#d0d0d0"/></svg><svg style="left:774px;top:731px;" width="5" height="3" viewBox="0 0 5 3"><path d="M0 0h5l-2.5 3z" fill="#a8a8a8"/></svg><svg style="left:786px;top:724px;" width="14" height="15" viewBox="0 0 14 15"><rect x=".5" y=".5" width="13" height="14" fill="#f0f0f0" stroke="#d0d0d0"/><rect x=".5" y=".5" width="3" height="14" fill="#e0e0e0"/><path d="M.5 3.5h13" stroke="#d4d4d4"/></svg><svg style="left:807px;top:731px;" width="5" height="3" viewBox="0 0 5 3"><path d="M0 0h5l-2.5 3z" fill="#a8a8a8"/></svg><svg style="left:818px;top:724px;" width="16" height="15" viewBox="0 0 16 15"><path d="M8 .8c4 0 7 2.4 7 5.5s-3 5.5-7 5.5l-1 0 1 2.5-4-2.8C2 10.5 1 8.5 1 6.3 1 3.2 4 .8 8 .8z" fill="#ececec" stroke="#d2d2d2" stroke-width="1.2"/></svg><svg style="left:840px;top:731px;" width="5" height="3" viewBox="0 0 5 3"><path d="M0 0h5l-2.5 3z" fill="#a8a8a8"/></svg><svg style="left:851px;top:724px;" width="15" height="15" viewBox="0 0 15 15"><path d="M7.5 .8l2 4.8 5 .4-3.8 3.3 1.2 5-4.4-2.7-4.4 2.7 1.2-5L.5 6l5-.4z" fill="#e4e4e4" stroke="#c8c8c8"/></svg><svg style="left:872px;top:731px;" width="5" height="3" viewBox="0 0 5 3"><path d="M0 0h5l-2.5 3z" fill="#a8a8a8"/></svg><div class="a" style="left:884px;top:724px;width:1px;height:16px;background:#cfcfcf;"></div><div class="a" style="left:896px;top:725px;width:1.5px;height:1.5px;background:#c0c0c0;"></div><div class="a" style="left:903px;top:725px;width:1.5px;height:1.5px;background:#c0c0c0;"></div><div class="a" style="left:892px;top:731px;width:1.5px;height:1.5px;background:#c0c0c0;"></div><div class="a" style="left:907px;top:733px;width:1.5px;height:1.5px;background:#c0c0c0;"></div><div class="a" style="left:895px;top:737px;width:1.5px;height:1.5px;background:#c0c0c0;"></div><div class="a" style="left:904px;top:738px;width:1.5px;height:1.5px;background:#c0c0c0;"></div><div class="a" style="left:914px;top:724px;width:1px;height:16px;background:#cfcfcf;"></div><svg style="left:921px;top:724px;" width="16" height="14" viewBox="0 0 16 14"><rect x=".5" y="2.5" width="15" height="11" fill="#f2f2f2" stroke="#cdcdcd"/><rect x="5" y=".5" width="6" height="2" fill="#e4e4e4" stroke="#cdcdcd"/><text x="8" y="11" text-anchor="middle" font-size="7" fill="#b0b0b0" font-family="Liberation Sans">A</text></svg><svg style="left:944px;top:724px;" width="16" height="15" viewBox="0 0 16 15"><rect x=".5" y="5.5" width="9" height="8" fill="#e4e4e4" stroke="#c8c8c8"/><circle cx="10" cy="6" r="5" fill="#ececec" stroke="#c8c8c8"/></svg><div class="a" style="left:967px;top:724px;width:1px;height:16px;background:#cfcfcf;"></div><svg style="left:974px;top:724px;" width="16" height="15" viewBox="0 0 16 15"><path d="M1 1h6v6H1z" fill="#e0e0e0" stroke="#c8c8c8"/><path d="M5 5h6v4h4v5H7v-4H5z" fill="#e8e8e8" stroke="#c8c8c8"/></svg><div class="a" style="left:999px;top:720px;width:9px;height:23px;background:linear-gradient(#f4f4f4,#9a9a9a);"></div><svg style="left:1001px;top:737px;" width="5" height="3" viewBox="0 0 5 3"><path d="M0 0h5l-2.5 3z" fill="#111"/></svg><div class="a" style="left:1009px;top:717px;width:1px;height:29px;background:#e4e4e4;"></div><div class="a" style="left:1px;top:745px;width:1199px;height:1px;background:#d0d0d0;"></div><div class="a" style="left:1px;top:746px;width:1199px;height:1px;background:#b8b8b8;"></div><div class="a" style="left:1px;top:747px;width:1198px;height:19px;background:#f0f0f0;"></div><div class="t" id="t24" style="left:10px;top:752px;font-size:11px;color:#1a1a1a;transform:scaleX(0.8526);">ページ 1 / 1</div><div class="a" style="left:224px;top:749px;width:1px;height:16px;background:#bdbdbd;"></div><div class="t" id="t25" style="left:230px;top:752px;font-size:11px;color:#1a1a1a;transform:scaleX(0.8485);">最初のページ</div><div class="a" style="left:451px;top:749px;width:1px;height:16px;background:#bdbdbd;"></div><div class="a" style="left:621px;top:749px;width:1px;height:16px;background:#bdbdbd;"></div><div class="a" style="left:667px;top:749px;width:1px;height:16px;background:#bdbdbd;"></div><div class="a" style="left:700px;top:749px;width:1px;height:16px;background:#bdbdbd;"></div><div class="a" style="left:714px;top:749px;width:1px;height:16px;background:#bdbdbd;"></div><div class="a" style="left:741px;top:749px;width:1px;height:16px;background:#bdbdbd;"></div><div class="a" style="left:1027px;top:749px;width:1px;height:16px;background:#bdbdbd;"></div><div class="a" style="left:1158px;top:749px;width:1px;height:16px;background:#bdbdbd;"></div><div class="t" id="t26" style="left:670px;top:752px;font-size:11px;color:#1a1a1a;transform:scaleX(1.0000);">標準</div><svg style="left:1032px;top:752px;" width="12" height="12" viewBox="0 0 12 12"><circle cx="6" cy="6" r="5" fill="#f4f8fc" stroke="#4a6080" stroke-width="1.3"/><path d="M3.5 6h5" stroke="#3a5070" stroke-width="1.4"/></svg><div class="a" style="left:1048px;top:756px;width:88px;height:3px;background:#f4f4f4;border:1px solid #9a9a9a;border-radius:1px"></div><div class="a" style="left:1058px;top:752px;width:1px;height:10px;background:#707070;"></div><div class="a" style="left:1078px;top:752px;width:1px;height:10px;background:#707070;"></div><svg style="left:1087px;top:753px;" width="9" height="9" viewBox="0 0 9 9"><circle cx="4.5" cy="4.5" r="3.8" fill="#6a88a8" stroke="#3a5070"/></svg><svg style="left:1139px;top:752px;" width="12" height="12" viewBox="0 0 12 12"><circle cx="6" cy="6" r="5" fill="#f4f8fc" stroke="#4a6080" stroke-width="1.3"/><path d="M3.5 6h5M6 3.5v5" stroke="#3a5070" stroke-width="1.4"/></svg><div class="t" id="t27" style="left:1162px;top:752px;font-size:11px;color:#1a1a1a;transform:scaleX(0.9294);">100 %</div></body></html>
